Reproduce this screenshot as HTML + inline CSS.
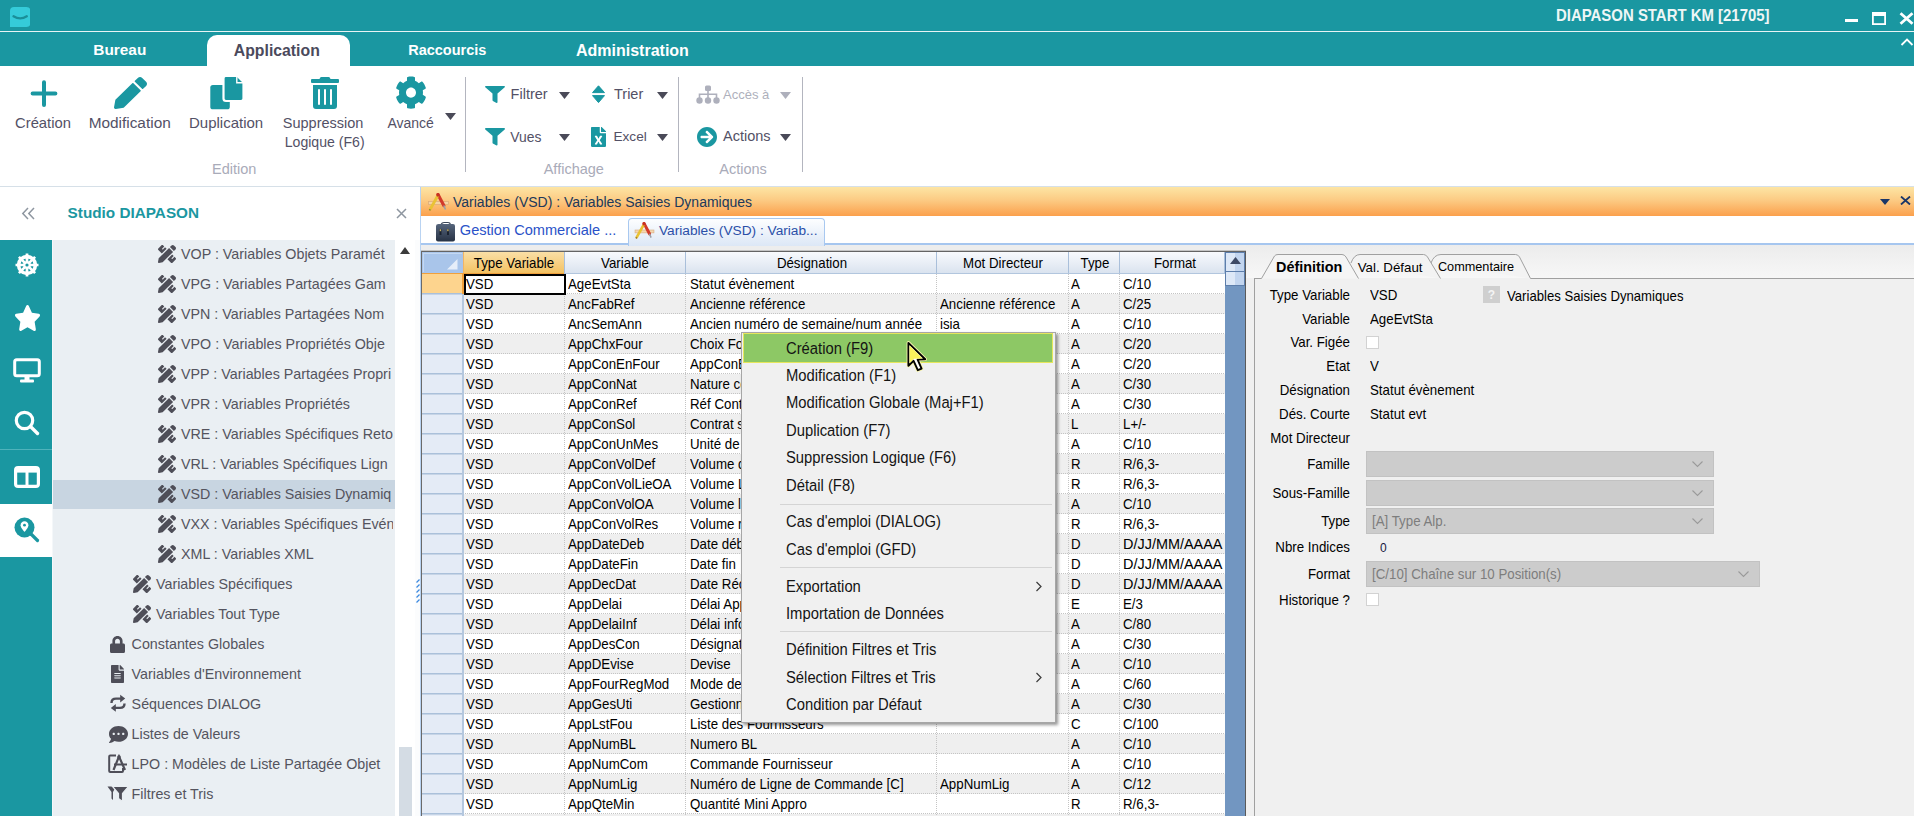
<!DOCTYPE html><html><head><meta charset="utf-8"><style>
html,body{margin:0;padding:0;}
body{width:1914px;height:816px;overflow:hidden;position:relative;background:#fff;font-family:"Liberation Sans", sans-serif;}
.t{position:absolute;white-space:nowrap;}
.r{position:absolute;}
</style></head><body>
<div class="r" style="left:0px;top:0px;width:1914px;height:31px;background:#1a97a1;"></div>
<div class="r" style="left:0px;top:31px;width:1914px;height:1px;background:#e8f4f5;"></div>
<div class="r" style="left:0px;top:32px;width:1914px;height:34px;background:#1a97a1;"></div>
<svg class="r" style="left:9.5px;top:7px;" width="20.5" height="20.5" viewBox="0 0 20.5 20.5"><path d="M0 4 Q0 0 4 0 H16.5 Q20.5 0 20.5 4 V16 Q20.5 20 16.5 20 H0 Z" fill="#35cbd9"/><path d="M3.5 9.3 Q10.2 13.6 16.8 9.3" stroke="#1a8f99" stroke-width="2.3" fill="none" stroke-linecap="round"/></svg>
<div class="t" style="left:1555.50px;top:4.79px;font-size:15.9px;line-height:21px;color:#eef6f6;font-weight:bold;transform:scaleX(0.94);transform-origin:left center;">DIAPASON START KM [21705]</div>
<div class="r" style="left:1845px;top:19px;width:13px;height:3px;background:#ffffff;"></div>
<svg class="r" style="left:1872px;top:12px;" width="14" height="13" viewBox="0 0 14 13"><rect x="0.9" y="1" width="12.2" height="11.1" fill="none" stroke="#fff" stroke-width="1.8"/><rect x="0" y="0" width="14" height="4" fill="#fff"/></svg>
<svg class="r" style="left:1899px;top:12px;" width="15" height="13" viewBox="0 0 15 13"><path d="M1.5 1.2 L13.5 11.8 M13.5 1.2 L1.5 11.8" stroke="#fff" stroke-width="2.8"/></svg>
<div class="t" style="left:93.30px;top:40.36px;font-size:15.4px;line-height:20px;color:#ffffff;font-weight:bold;">Bureau</div>
<div class="r" style="left:207px;top:35px;width:143px;height:31px;background:#fff;border-radius:10px 10px 0 0;"></div>
<div class="t" style="left:233.80px;top:39.63px;font-size:15.8px;line-height:21px;color:#4b4a5c;font-weight:bold;">Application</div>
<div class="t" style="left:408.20px;top:41.18px;font-size:14.5px;line-height:19px;color:#ffffff;font-weight:bold;">Raccourcis</div>
<div class="t" style="left:576.00px;top:39.66px;font-size:16.0px;line-height:21px;color:#ffffff;font-weight:bold;">Administration</div>
<svg class="r" style="left:1900px;top:37px;" width="14" height="10" viewBox="0 0 14 10"><path d="M1.5 8 L7 2.5 L12.5 8" stroke="#fff" stroke-width="1.8" fill="none"/></svg>
<div class="r" style="left:0px;top:186px;width:1914px;height:1px;background:#d6e0e8;"></div>
<svg class="r" style="left:30px;top:80px;" width="28" height="28" viewBox="0 0 28 28"><path d="M14 2.2 V25 M2.6 13.4 H25.4" stroke="#1a97a1" stroke-width="4" stroke-linecap="round"/></svg>
<svg class="r" style="left:114px;top:77px;" width="33" height="32" viewBox="0 0 512 512" preserveAspectRatio="none"><path d="M497.9 142.1l-46.1 46.1c-4.7 4.7-12.3 4.7-17 0l-111-111c-4.7-4.7-4.7-12.3 0-17l46.1-46.1c18.7-18.7 49.1-18.7 67.9 0l60.1 60.1c18.8 18.7 18.8 49.1 0 67.9zM284.2 99.8L21.6 362.4.4 483.9c-2.9 16.4 11.4 30.6 27.8 27.8l121.5-21.3 262.6-262.6c4.7-4.7 4.7-12.3 0-17l-111-111c-4.8-4.7-12.4-4.7-17.1 0z" fill="#1a97a1"/></svg>
<svg class="r" style="left:210px;top:76px;" width="34" height="34" viewBox="0 0 34 34"><rect x="0.3" y="9" width="19.5" height="24.3" rx="2.6" fill="#1a97a1"/><path d="M13.5 0 H27.5 L33.5 6 V22.5 Q33.5 25 31 25 H16 Q13.5 25 13.5 22.5 V2.5 Q13.5 0 16 0 Z" fill="#1a97a1" stroke="#fff" stroke-width="2.2"/><path d="M26.8 0.5 V6.8 H33.2" stroke="#fff" stroke-width="1.4" fill="none"/></svg>
<svg class="r" style="left:311px;top:77px;" width="28" height="32" viewBox="0 0 448 512" preserveAspectRatio="none"><path d="M32 464a48 48 0 0 0 48 48h288a48 48 0 0 0 48-48V128H32zm272-256a16 16 0 0 1 32 0v224a16 16 0 0 1-32 0zm-96 0a16 16 0 0 1 32 0v224a16 16 0 0 1-32 0zm-96 0a16 16 0 0 1 32 0v224a16 16 0 0 1-32 0zM432 32H312l-9.4-18.7A24 24 0 0 0 281.1 0H166.8a23.72 23.72 0 0 0-21.4 13.3L136 32H16A16 16 0 0 0 0 48v32a16 16 0 0 0 16 16h416a16 16 0 0 0 16-16V48a16 16 0 0 0-16-16z" fill="#1a97a1"/></svg>
<svg class="r" style="left:394.6px;top:76.3px;" width="32" height="33.2" viewBox="0 0 512 512" preserveAspectRatio="none"><path d="M487.4 315.7l-42.6-24.6c4.3-23.2 4.3-47 0-70.2l42.6-24.6c4.9-2.8 7.1-8.6 5.5-14-11.1-35.6-30-67.8-54.7-94.6-3.8-4.1-10-5.1-14.8-2.3L380.8 110c-17.900-15.4-38.5-27.3-60.8-35.1V25.8c0-5.6-3.9-10.5-9.4-11.7-36.7-8.2-74.3-7.8-109.2 0-5.5 1.2-9.4 6.1-9.4 11.7V75c-22.2 7.9-42.8 19.8-60.8 35.1L88.7 85.5c-4.9-2.8-11-1.9-14.8 2.3-24.7 26.7-43.6 58.9-54.7 94.6-1.7 5.4.6 11.2 5.5 14L67.3 221c-4.3 23.2-4.3 47 0 70.2l-42.6 24.6c-4.9 2.8-7.1 8.6-5.5 14 11.1 35.6 30 67.8 54.7 94.6 3.8 4.1 10 5.1 14.8 2.3l42.6-24.6c17.9 15.4 38.5 27.3 60.8 35.1v49.2c0 5.6 3.9 10.5 9.4 11.7 36.7 8.2 74.3 7.8 109.2 0 5.5-1.2 9.4-6.1 9.4-11.7v-49.2c22.2-7.9 42.8-19.8 60.8-35.1l42.6 24.6c4.9 2.8 11 1.9 14.8-2.3 24.7-26.7 43.6-58.9 54.7-94.6 1.5-5.5-.7-11.3-5.6-14.1zM256 336c-44.1 0-80-35.900-80-80s35.9-80 80-80 80 35.9 80 80-35.9 80-80 80z" fill="#1a97a1"/></svg>
<svg class="r" style="left:444.5px;top:113px;" width="11" height="7" viewBox="0 0 11 7"><path d="M0 0 L11 0 L5.5 7 Z" fill="#4a4a58"/></svg>
<div class="t" style="left:-17.00px;width:120px;text-align:center;top:113.67px;font-size:14.8px;line-height:19px;color:#535166;font-weight:normal;">Création</div>
<div class="t" style="left:69.70px;width:120px;text-align:center;top:112.96px;font-size:15.4px;line-height:20px;color:#535166;font-weight:normal;">Modification</div>
<div class="t" style="left:166.10px;width:120px;text-align:center;top:113.10px;font-size:15.0px;line-height:20px;color:#535166;font-weight:normal;">Duplication</div>
<div class="t" style="left:263.10px;width:120px;text-align:center;top:113.78px;font-size:14.5px;line-height:19px;color:#535166;font-weight:normal;">Suppression</div>
<div class="t" style="left:264.70px;width:120px;text-align:center;top:132.61px;font-size:14.1px;line-height:18px;color:#535166;font-weight:normal;">Logique (F6)</div>
<div class="t" style="left:350.70px;width:120px;text-align:center;top:114.45px;font-size:14.0px;line-height:18px;color:#535166;font-weight:normal;">Avancé</div>
<div class="t" style="left:174.25px;width:120px;text-align:center;top:159.68px;font-size:14.5px;line-height:19px;color:#a9abb9;font-weight:normal;">Edition</div>
<div class="r" style="left:465px;top:77px;width:1px;height:95px;background:#b3b5bf;"></div>
<div class="r" style="left:678px;top:77px;width:1px;height:95px;background:#b3b5bf;"></div>
<div class="r" style="left:802px;top:77px;width:1px;height:95px;background:#b3b5bf;"></div>
<svg class="r" style="left:485px;top:86px;" width="20" height="17" viewBox="0 0 512 512" preserveAspectRatio="none"><path d="M487.976 0H24.028C2.71 0-8.047 25.866 7.058 40.971L192 225.941V432c0 7.831 3.821 15.17 10.237 19.662l80 55.98C298.02 518.69 320 507.493 320 487.98V225.941l184.947-184.97C520.021 25.896 509.338 0 487.976 0z" fill="#1a97a1"/></svg>
<div class="t" style="left:510.60px;top:84.88px;font-size:14.5px;line-height:19px;color:#535166;font-weight:normal;">Filtrer</div>
<svg class="r" style="left:558.5px;top:92px;" width="11" height="7" viewBox="0 0 11 7"><path d="M0 0 L11 0 L5.5 7 Z" fill="#4a4a58"/></svg>
<svg class="r" style="left:592px;top:85px;" width="13" height="19" viewBox="0 0 13 19"><path d="M6.5 0.8 L12.5 7.6 L0.5 7.6 Z M0.5 10.6 L12.5 10.6 L6.5 17.6 Z" fill="#1a97a1" stroke="#1a97a1" stroke-width="1" stroke-linejoin="round"/></svg>
<div class="t" style="left:614.00px;top:84.88px;font-size:14.5px;line-height:19px;color:#535166;font-weight:normal;">Trier</div>
<svg class="r" style="left:657px;top:92px;" width="11" height="7" viewBox="0 0 11 7"><path d="M0 0 L11 0 L5.5 7 Z" fill="#4a4a58"/></svg>
<svg class="r" style="left:485px;top:128px;" width="20" height="17.5" viewBox="0 0 512 512" preserveAspectRatio="none"><path d="M487.976 0H24.028C2.71 0-8.047 25.866 7.058 40.971L192 225.941V432c0 7.831 3.821 15.17 10.237 19.662l80 55.98C298.02 518.69 320 507.493 320 487.98V225.941l184.947-184.97C520.021 25.896 509.338 0 487.976 0z" fill="#1a97a1"/></svg>
<div class="t" style="left:510.30px;top:127.68px;font-size:13.9px;line-height:18px;color:#535166;font-weight:normal;">Vues</div>
<svg class="r" style="left:558.5px;top:134px;" width="11" height="7" viewBox="0 0 11 7"><path d="M0 0 L11 0 L5.5 7 Z" fill="#4a4a58"/></svg>
<svg class="r" style="left:591px;top:127px;" width="15" height="20" viewBox="0 0 384 512" preserveAspectRatio="none"><path d="M224 136V0H24C10.7 0 0 10.7 0 24v464c0 13.3 10.7 24 24 24h336c13.3 0 24-10.7 24-24V160H248c-13.2 0-24-10.8-24-24zm60.1 106.5L224 336l60.1 93.5c5.1 8-.6 18.5-10.1 18.5h-34.9c-4.4 0-8.5-2.4-10.6-6.3C208.9 405.5 192 373 192 373c-6.4 14.8-10 20-36.6 68.8-2.1 3.9-6.1 6.3-10.5 6.3H110c-9.5 0-15.2-10.5-10.1-18.5l60.3-93.5-60.3-93.5c-5.2-8 .6-18.5 10.1-18.5h34.8c4.4 0 8.500 2.4 10.6 6.3 26.1 48.8 20 33.6 36.6 68.5 0 0 6.1-11.7 36.6-68.5 2.1-3.9 6.2-6.3 10.6-6.3H274c9.5-.1 15.2 10.4 10.1 18.4zM384 121.9v6.1H256V0h6.1c6.4 0 12.5 2.5 17 7l97.9 98c4.5 4.5 7 10.6 7 16.9z" fill="#1a97a1"/></svg>
<div class="t" style="left:613.50px;top:127.79px;font-size:13.6px;line-height:18px;color:#535166;font-weight:normal;">Excel</div>
<svg class="r" style="left:657px;top:134px;" width="11" height="7" viewBox="0 0 11 7"><path d="M0 0 L11 0 L5.5 7 Z" fill="#4a4a58"/></svg>
<div class="t" style="left:513.80px;width:120px;text-align:center;top:159.68px;font-size:14.5px;line-height:19px;color:#a9abb9;font-weight:normal;">Affichage</div>
<svg class="r" style="left:696px;top:85px;" width="24" height="19" viewBox="0 0 24 19"><g fill="#aeb0bc"><rect x="9" y="0.5" width="6" height="5.5" rx="1.5"/><path d="M12 5 V9 M3.5 13 V9.2 H20.5 V13 M12 9 V13" stroke="#aeb0bc" stroke-width="1.6" fill="none"/><circle cx="3.5" cy="15.5" r="3.2"/><circle cx="12" cy="15.5" r="3.2"/><circle cx="20.5" cy="15.5" r="3.2"/></g></svg>
<div class="t" style="left:723.00px;top:86.40px;font-size:13.0px;line-height:17px;color:#aeb0bc;font-weight:normal;">Accès à</div>
<svg class="r" style="left:780px;top:92px;" width="11" height="7" viewBox="0 0 11 7"><path d="M0 0 L11 0 L5.5 7 Z" fill="#aeb0bc"/></svg>
<svg class="r" style="left:697px;top:127px;" width="20" height="20" viewBox="8 8 496 496" preserveAspectRatio="none"><path d="M256 8c137 0 248 111 248 248S393 504 256 504 8 393 8 256 119 8 256 8zm-28.9 143.6l75.5 72.4H120c-13.3 0-24 10.7-24 24v16c0 13.3 10.7 24 24 24h182.6l-75.5 72.4c-9.7 9.3-9.9 24.8-.4 34.3l11 10.9c9.4 9.4 24.6 9.4 33.9 0L404.3 273c9.4-9.4 9.4-24.6 0-33.9L271.6 106.3c-9.4-9.4-24.6-9.4-33.9 0l-11 10.9c-9.5 9.6-9.3 25.1.4 34.4z" fill="#1a97a1"/></svg>
<div class="t" style="left:723.00px;top:126.98px;font-size:14.5px;line-height:19px;color:#535166;font-weight:normal;">Actions</div>
<svg class="r" style="left:780px;top:134px;" width="11" height="7" viewBox="0 0 11 7"><path d="M0 0 L11 0 L5.5 7 Z" fill="#4a4a58"/></svg>
<div class="t" style="left:683.00px;width:120px;text-align:center;top:159.68px;font-size:14.5px;line-height:19px;color:#a9abb9;font-weight:normal;">Actions</div>
<div class="r" style="left:0px;top:187px;width:420px;height:53px;background:#ffffff;"></div>
<svg class="r" style="left:21px;top:207px;" width="14" height="13" viewBox="0 0 14 13"><path d="M7 1 L1.8 6.5 L7 12 M13 1 L7.8 6.5 L13 12" stroke="#8e96a0" stroke-width="1.5" fill="none"/></svg>
<div class="t" style="left:67.60px;top:203.20px;font-size:15.3px;line-height:20px;color:#1b97a1;font-weight:bold;">Studio DIAPASON</div>
<svg class="r" style="left:396px;top:208px;" width="11" height="11" viewBox="0 0 11 11"><path d="M1 1 L10 10 M10 1 L1 10" stroke="#8e96a0" stroke-width="1.5"/></svg>
<div class="r" style="left:0px;top:240px;width:52px;height:576px;background:#1a97a1;"></div>
<div class="r" style="left:52px;top:240px;width:1px;height:576px;background:#f4f7f9;"></div>
<div class="r" style="left:0px;top:449px;width:52px;height:1px;background:#4fb3bb;"></div>
<div class="r" style="left:0px;top:504px;width:52px;height:53px;background:#ffffff;"></div>
<div class="r" style="left:53px;top:240px;width:342px;height:576px;background:#eaeff3;"></div>
<div class="r" style="left:395px;top:240px;width:20px;height:576px;background:#ffffff;"></div>
<div class="r" style="left:415px;top:240px;width:5px;height:576px;background:#fbfcfd;"></div>
<svg class="r" style="left:400px;top:247px" width="10" height="7"><path d="M0 7 L10 7 L5 0 Z" fill="#3c3c3c"/></svg>
<div class="r" style="left:399px;top:747px;width:13px;height:69px;background:#d4dce4;"></div>
<svg class="r" style="left:416px;top:579px;" width="4" height="4" viewBox="0 0 4 4"><path d="M0.5 3.5 L3.5 0.5" stroke="#3d8ae0" stroke-width="1.2"/></svg>
<svg class="r" style="left:416px;top:584px;" width="4" height="4" viewBox="0 0 4 4"><path d="M0.5 3.5 L3.5 0.5" stroke="#3d8ae0" stroke-width="1.2"/></svg>
<svg class="r" style="left:416px;top:589px;" width="4" height="4" viewBox="0 0 4 4"><path d="M0.5 3.5 L3.5 0.5" stroke="#3d8ae0" stroke-width="1.2"/></svg>
<svg class="r" style="left:416px;top:594px;" width="4" height="4" viewBox="0 0 4 4"><path d="M0.5 3.5 L3.5 0.5" stroke="#3d8ae0" stroke-width="1.2"/></svg>
<svg class="r" style="left:416px;top:599px;" width="4" height="4" viewBox="0 0 4 4"><path d="M0.5 3.5 L3.5 0.5" stroke="#3d8ae0" stroke-width="1.2"/></svg>
<svg class="r" style="left:14px;top:252px;" width="26" height="26" viewBox="0 0 26 26"><g fill="none" stroke="#fff">
<circle cx="13" cy="13" r="8.4" stroke-width="3.6"/>
<circle cx="13" cy="13" r="2.6" stroke-width="2.4"/>
</g>
<g stroke="#fff" stroke-width="2.7">
<path d="M13 1.5 V24.5 M1.5 13 H24.5 M4.9 4.9 L21.1 21.1 M21.1 4.9 L4.9 21.1"/>
</g>
<circle cx="13" cy="13" r="1.6" fill="#1a97a1"/></svg>
<svg class="r" style="left:14px;top:305px;" width="27" height="26" viewBox="0 0 576 512" preserveAspectRatio="none"><path d="M259.3 17.8L194 150.2 47.9 171.5c-26.2 3.8-36.7 36.1-17.7 54.6l105.7 103-25 145.5c-4.5 26.3 23.2 46 46.4 33.7L288 439.6l130.7 68.7c23.2 12.2 50.9-7.4 46.4-33.7l-25-145.5 105.7-103c19-18.5 8.5-50.8-17.7-54.6L382 150.2 316.7 17.8c-11.7-23.6-45.6-23.9-57.4 0z" fill="#ffffff"/></svg>
<svg class="r" style="left:13px;top:358px;" width="28" height="25" viewBox="0 0 28 25"><rect x="1.7" y="1.7" width="24.6" height="16" rx="2" fill="none" stroke="#fff" stroke-width="3"/><rect x="11.5" y="18" width="5" height="4" fill="#fff"/><rect x="7" y="21.5" width="14" height="3" rx="1" fill="#fff"/></svg>
<svg class="r" style="left:14px;top:410px;" width="26" height="26" viewBox="0 0 26 26"><circle cx="10.5" cy="10.5" r="8.2" fill="none" stroke="#fff" stroke-width="3.2"/><path d="M16.5 16.5 L23.5 23.5" stroke="#fff" stroke-width="3.4" stroke-linecap="round"/></svg>
<svg class="r" style="left:14px;top:466px;" width="26" height="22" viewBox="0 0 26 22"><rect x="1.6" y="1.6" width="22.8" height="18.8" rx="2.5" fill="none" stroke="#fff" stroke-width="3.2"/><rect x="1.6" y="1.6" width="22.8" height="5" fill="#fff"/><path d="M13 3 V20" stroke="#fff" stroke-width="3"/></svg>
<svg class="r" style="left:14px;top:517px;" width="26" height="26" viewBox="0 0 26 26"><circle cx="10.5" cy="10.5" r="10" fill="#1a97a1"/><path d="M17 17 L23.5 23.5" stroke="#1a97a1" stroke-width="3.2" stroke-linecap="round"/><path d="M10.5 4.3 C8.2 4.3 6.6 6 6.6 8.2 C6.6 10.8 10.5 14.8 10.5 14.8 C10.5 14.8 14.4 10.8 14.4 8.2 C14.4 6 12.8 4.3 10.5 4.3 Z" fill="#fff"/><circle cx="10.5" cy="8.2" r="1.4" fill="#1a97a1"/></svg>
<div class="r" style="left:53px;top:480px;width:342px;height:29px;background:#c8d5e1;"></div>
<div class="r" style="left:53px;top:240px;width:340px;height:576px;overflow:hidden;">
<svg class="r" style="left:105px;top:5.399999999999977px;" width="18" height="18" viewBox="0 0 512 512" preserveAspectRatio="none"><path d="M109.46 244.04l134.58-134.56-44.12-44.12-61.68 61.68a7.919 7.919 0 0 1-11.21 0l-11.21-11.21c-3.1-3.1-3.1-8.12 0-11.21l61.68-61.68-33.64-33.65C131.47-3.1 111.39-3.1 99 9.29L9.29 99c-12.38 12.39-12.39 32.47 0 44.86l100.17 100.18zm388.47-116.8c18.76-18.76 18.75-49.17 0-67.930l-45.25-45.25c-18.76-18.76-49.18-18.76-67.95 0l-46.02 46.01 113.2 113.2 46.02-46.03zM316.08 82.71l-297 296.96L.32 487.11c-2.53 14.49 10.09 27.11 24.59 24.56l107.45-18.840L429.28 195.9 316.08 82.71zm186.63 285.43l-33.64-33.64-61.68 61.68c-3.1 3.1-8.12 3.1-11.21 0l-11.21-11.21c-3.09-3.1-3.09-8.12 0-11.21l61.68-61.68-44.14-44.14L267.93 402.5l100.21 100.2c12.39 12.39 32.47 12.39 44.86 0l89.71-89.7c12.39-12.39 12.39-32.47 0-44.86z" fill="#4e4e58"/></svg>
<div class="t" style="left:128.00px;top:4.95px;font-size:14.3px;line-height:19px;color:#54545e;font-weight:normal;">VOP : Variables Objets Paramét</div>
<svg class="r" style="left:105px;top:35.39999999999998px;" width="18" height="18" viewBox="0 0 512 512" preserveAspectRatio="none"><path d="M109.46 244.04l134.58-134.56-44.12-44.12-61.68 61.68a7.919 7.919 0 0 1-11.21 0l-11.21-11.21c-3.1-3.1-3.1-8.12 0-11.21l61.68-61.68-33.64-33.65C131.47-3.1 111.39-3.1 99 9.29L9.29 99c-12.38 12.39-12.39 32.47 0 44.86l100.17 100.18zm388.47-116.8c18.76-18.76 18.75-49.17 0-67.930l-45.25-45.25c-18.76-18.76-49.18-18.76-67.95 0l-46.02 46.01 113.2 113.2 46.02-46.03zM316.08 82.71l-297 296.96L.32 487.11c-2.53 14.49 10.09 27.11 24.59 24.56l107.45-18.840L429.28 195.9 316.08 82.71zm186.63 285.43l-33.64-33.64-61.68 61.68c-3.1 3.1-8.12 3.1-11.21 0l-11.21-11.21c-3.09-3.1-3.09-8.12 0-11.21l61.68-61.68-44.14-44.14L267.93 402.5l100.21 100.2c12.39 12.39 32.47 12.39 44.86 0l89.71-89.7c12.39-12.39 12.39-32.47 0-44.86z" fill="#4e4e58"/></svg>
<div class="t" style="left:128.00px;top:34.95px;font-size:14.3px;line-height:19px;color:#54545e;font-weight:normal;">VPG : Variables Partagées Gam</div>
<svg class="r" style="left:105px;top:65.39999999999998px;" width="18" height="18" viewBox="0 0 512 512" preserveAspectRatio="none"><path d="M109.46 244.04l134.58-134.56-44.12-44.12-61.68 61.68a7.919 7.919 0 0 1-11.21 0l-11.21-11.21c-3.1-3.1-3.1-8.12 0-11.21l61.68-61.68-33.64-33.65C131.47-3.1 111.39-3.1 99 9.29L9.29 99c-12.38 12.39-12.39 32.47 0 44.86l100.17 100.18zm388.47-116.8c18.76-18.76 18.75-49.17 0-67.930l-45.25-45.25c-18.76-18.76-49.18-18.76-67.95 0l-46.02 46.01 113.2 113.2 46.02-46.03zM316.08 82.71l-297 296.96L.32 487.11c-2.53 14.49 10.09 27.11 24.59 24.56l107.45-18.840L429.28 195.9 316.08 82.71zm186.63 285.43l-33.64-33.64-61.68 61.68c-3.1 3.1-8.12 3.1-11.21 0l-11.21-11.21c-3.09-3.1-3.09-8.12 0-11.21l61.68-61.68-44.14-44.14L267.93 402.5l100.21 100.2c12.39 12.39 32.47 12.39 44.86 0l89.71-89.7c12.39-12.39 12.39-32.47 0-44.86z" fill="#4e4e58"/></svg>
<div class="t" style="left:128.00px;top:64.95px;font-size:14.3px;line-height:19px;color:#54545e;font-weight:normal;">VPN : Variables Partagées Nom</div>
<svg class="r" style="left:105px;top:95.39999999999998px;" width="18" height="18" viewBox="0 0 512 512" preserveAspectRatio="none"><path d="M109.46 244.04l134.58-134.56-44.12-44.12-61.68 61.68a7.919 7.919 0 0 1-11.21 0l-11.21-11.21c-3.1-3.1-3.1-8.12 0-11.21l61.68-61.68-33.64-33.65C131.47-3.1 111.39-3.1 99 9.29L9.29 99c-12.38 12.39-12.39 32.47 0 44.86l100.17 100.18zm388.47-116.8c18.76-18.76 18.75-49.17 0-67.930l-45.25-45.25c-18.76-18.76-49.18-18.76-67.95 0l-46.02 46.01 113.2 113.2 46.02-46.03zM316.08 82.71l-297 296.96L.32 487.11c-2.53 14.49 10.09 27.11 24.59 24.56l107.45-18.840L429.28 195.9 316.08 82.71zm186.63 285.43l-33.64-33.64-61.68 61.68c-3.1 3.1-8.12 3.1-11.21 0l-11.21-11.21c-3.09-3.1-3.09-8.12 0-11.21l61.68-61.68-44.14-44.14L267.93 402.5l100.21 100.2c12.39 12.39 32.47 12.39 44.86 0l89.71-89.7c12.39-12.39 12.39-32.47 0-44.86z" fill="#4e4e58"/></svg>
<div class="t" style="left:128.00px;top:94.95px;font-size:14.3px;line-height:19px;color:#54545e;font-weight:normal;">VPO : Variables Propriétés Obje</div>
<svg class="r" style="left:105px;top:125.39999999999998px;" width="18" height="18" viewBox="0 0 512 512" preserveAspectRatio="none"><path d="M109.46 244.04l134.58-134.56-44.12-44.12-61.68 61.68a7.919 7.919 0 0 1-11.21 0l-11.21-11.21c-3.1-3.1-3.1-8.12 0-11.21l61.68-61.68-33.64-33.65C131.47-3.1 111.39-3.1 99 9.29L9.29 99c-12.38 12.39-12.39 32.47 0 44.86l100.17 100.18zm388.47-116.8c18.76-18.76 18.75-49.17 0-67.930l-45.25-45.25c-18.76-18.76-49.18-18.76-67.95 0l-46.02 46.01 113.2 113.2 46.02-46.03zM316.08 82.71l-297 296.96L.32 487.11c-2.53 14.49 10.09 27.11 24.59 24.56l107.45-18.840L429.28 195.9 316.08 82.71zm186.63 285.43l-33.64-33.64-61.68 61.68c-3.1 3.1-8.12 3.1-11.21 0l-11.21-11.21c-3.09-3.1-3.09-8.12 0-11.21l61.68-61.68-44.14-44.14L267.93 402.5l100.21 100.2c12.39 12.39 32.47 12.39 44.86 0l89.71-89.7c12.39-12.39 12.39-32.47 0-44.86z" fill="#4e4e58"/></svg>
<div class="t" style="left:128.00px;top:124.95px;font-size:14.3px;line-height:19px;color:#54545e;font-weight:normal;">VPP : Variables Partagées Propri</div>
<svg class="r" style="left:105px;top:155.39999999999998px;" width="18" height="18" viewBox="0 0 512 512" preserveAspectRatio="none"><path d="M109.46 244.04l134.58-134.56-44.12-44.12-61.68 61.68a7.919 7.919 0 0 1-11.21 0l-11.21-11.21c-3.1-3.1-3.1-8.12 0-11.21l61.68-61.68-33.64-33.65C131.47-3.1 111.39-3.1 99 9.29L9.29 99c-12.38 12.39-12.39 32.47 0 44.86l100.17 100.18zm388.47-116.8c18.76-18.76 18.75-49.17 0-67.930l-45.25-45.25c-18.76-18.76-49.18-18.76-67.95 0l-46.02 46.01 113.2 113.2 46.02-46.03zM316.08 82.71l-297 296.96L.32 487.11c-2.53 14.49 10.09 27.11 24.59 24.56l107.45-18.840L429.28 195.9 316.08 82.71zm186.63 285.43l-33.64-33.64-61.68 61.68c-3.1 3.1-8.12 3.1-11.21 0l-11.21-11.21c-3.09-3.1-3.09-8.12 0-11.21l61.68-61.68-44.14-44.14L267.93 402.5l100.21 100.2c12.39 12.39 32.47 12.39 44.86 0l89.71-89.7c12.39-12.39 12.39-32.47 0-44.86z" fill="#4e4e58"/></svg>
<div class="t" style="left:128.00px;top:154.95px;font-size:14.3px;line-height:19px;color:#54545e;font-weight:normal;">VPR : Variables Propriétés</div>
<svg class="r" style="left:105px;top:185.39999999999998px;" width="18" height="18" viewBox="0 0 512 512" preserveAspectRatio="none"><path d="M109.46 244.04l134.58-134.56-44.12-44.12-61.68 61.68a7.919 7.919 0 0 1-11.21 0l-11.21-11.21c-3.1-3.1-3.1-8.12 0-11.21l61.68-61.68-33.64-33.65C131.47-3.1 111.39-3.1 99 9.29L9.29 99c-12.38 12.39-12.39 32.47 0 44.86l100.17 100.18zm388.47-116.8c18.76-18.76 18.75-49.17 0-67.930l-45.25-45.25c-18.76-18.76-49.18-18.76-67.95 0l-46.02 46.01 113.2 113.2 46.02-46.03zM316.08 82.71l-297 296.96L.32 487.11c-2.53 14.49 10.09 27.11 24.59 24.56l107.45-18.840L429.28 195.9 316.08 82.71zm186.63 285.43l-33.64-33.64-61.68 61.68c-3.1 3.1-8.12 3.1-11.21 0l-11.21-11.21c-3.09-3.1-3.09-8.12 0-11.21l61.68-61.68-44.14-44.14L267.93 402.5l100.21 100.2c12.39 12.39 32.47 12.39 44.86 0l89.71-89.7c12.39-12.39 12.39-32.47 0-44.86z" fill="#4e4e58"/></svg>
<div class="t" style="left:128.00px;top:184.95px;font-size:14.3px;line-height:19px;color:#54545e;font-weight:normal;">VRE : Variables Spécifiques Reto</div>
<svg class="r" style="left:105px;top:215.39999999999998px;" width="18" height="18" viewBox="0 0 512 512" preserveAspectRatio="none"><path d="M109.46 244.04l134.58-134.56-44.12-44.12-61.68 61.68a7.919 7.919 0 0 1-11.21 0l-11.21-11.21c-3.1-3.1-3.1-8.12 0-11.21l61.68-61.68-33.64-33.65C131.47-3.1 111.39-3.1 99 9.29L9.29 99c-12.38 12.39-12.39 32.47 0 44.86l100.17 100.18zm388.47-116.8c18.76-18.76 18.75-49.17 0-67.930l-45.25-45.25c-18.76-18.76-49.18-18.76-67.95 0l-46.02 46.01 113.2 113.2 46.02-46.03zM316.08 82.71l-297 296.96L.32 487.11c-2.53 14.49 10.09 27.11 24.59 24.56l107.45-18.840L429.28 195.9 316.08 82.71zm186.63 285.43l-33.64-33.64-61.68 61.68c-3.1 3.1-8.12 3.1-11.21 0l-11.21-11.21c-3.09-3.1-3.09-8.12 0-11.21l61.68-61.68-44.14-44.14L267.93 402.5l100.21 100.2c12.39 12.39 32.47 12.39 44.86 0l89.71-89.7c12.39-12.39 12.39-32.47 0-44.86z" fill="#4e4e58"/></svg>
<div class="t" style="left:128.00px;top:214.95px;font-size:14.3px;line-height:19px;color:#54545e;font-weight:normal;">VRL : Variables Spécifiques Lign</div>
<svg class="r" style="left:105px;top:245.39999999999998px;" width="18" height="18" viewBox="0 0 512 512" preserveAspectRatio="none"><path d="M109.46 244.04l134.58-134.56-44.12-44.12-61.68 61.68a7.919 7.919 0 0 1-11.21 0l-11.21-11.21c-3.1-3.1-3.1-8.12 0-11.21l61.68-61.68-33.64-33.65C131.47-3.1 111.39-3.1 99 9.29L9.29 99c-12.38 12.39-12.39 32.47 0 44.86l100.17 100.18zm388.47-116.8c18.76-18.76 18.75-49.17 0-67.930l-45.25-45.25c-18.76-18.76-49.18-18.76-67.95 0l-46.02 46.01 113.2 113.2 46.02-46.03zM316.08 82.71l-297 296.96L.32 487.11c-2.53 14.49 10.09 27.11 24.59 24.56l107.45-18.840L429.28 195.9 316.08 82.71zm186.63 285.43l-33.64-33.64-61.68 61.68c-3.1 3.1-8.12 3.1-11.21 0l-11.21-11.21c-3.09-3.1-3.09-8.12 0-11.21l61.68-61.68-44.14-44.14L267.93 402.5l100.21 100.2c12.39 12.39 32.47 12.39 44.86 0l89.71-89.7c12.39-12.39 12.39-32.47 0-44.86z" fill="#4e4e58"/></svg>
<div class="t" style="left:128.00px;top:244.95px;font-size:14.3px;line-height:19px;color:#54545e;font-weight:normal;">VSD : Variables Saisies Dynamiq</div>
<svg class="r" style="left:105px;top:275.4px;" width="18" height="18" viewBox="0 0 512 512" preserveAspectRatio="none"><path d="M109.46 244.04l134.58-134.56-44.12-44.12-61.68 61.68a7.919 7.919 0 0 1-11.21 0l-11.21-11.21c-3.1-3.1-3.1-8.12 0-11.21l61.68-61.68-33.64-33.65C131.47-3.1 111.39-3.1 99 9.29L9.29 99c-12.38 12.39-12.39 32.47 0 44.86l100.17 100.18zm388.47-116.8c18.76-18.76 18.75-49.17 0-67.930l-45.25-45.25c-18.76-18.76-49.18-18.76-67.95 0l-46.02 46.01 113.2 113.2 46.02-46.03zM316.08 82.71l-297 296.96L.32 487.11c-2.53 14.49 10.09 27.11 24.59 24.56l107.45-18.840L429.28 195.9 316.08 82.71zm186.63 285.43l-33.64-33.64-61.68 61.68c-3.1 3.1-8.12 3.1-11.21 0l-11.21-11.21c-3.09-3.1-3.09-8.12 0-11.21l61.68-61.68-44.14-44.14L267.93 402.5l100.21 100.2c12.39 12.39 32.47 12.39 44.86 0l89.71-89.7c12.39-12.39 12.39-32.47 0-44.86z" fill="#4e4e58"/></svg>
<div class="t" style="left:128.00px;top:274.95px;font-size:14.3px;line-height:19px;color:#54545e;font-weight:normal;">VXX : Variables Spécifiques Evén</div>
<svg class="r" style="left:105px;top:305.4px;" width="18" height="18" viewBox="0 0 512 512" preserveAspectRatio="none"><path d="M109.46 244.04l134.58-134.56-44.12-44.12-61.68 61.68a7.919 7.919 0 0 1-11.21 0l-11.21-11.21c-3.1-3.1-3.1-8.12 0-11.21l61.68-61.68-33.64-33.65C131.47-3.1 111.39-3.1 99 9.29L9.29 99c-12.38 12.39-12.39 32.47 0 44.86l100.17 100.18zm388.47-116.8c18.76-18.76 18.75-49.17 0-67.930l-45.25-45.25c-18.76-18.76-49.18-18.76-67.95 0l-46.02 46.01 113.2 113.2 46.02-46.03zM316.08 82.71l-297 296.96L.32 487.11c-2.53 14.49 10.09 27.11 24.59 24.56l107.45-18.840L429.28 195.9 316.08 82.71zm186.63 285.43l-33.64-33.64-61.68 61.68c-3.1 3.1-8.12 3.1-11.21 0l-11.21-11.21c-3.09-3.1-3.09-8.12 0-11.21l61.68-61.68-44.14-44.14L267.93 402.5l100.21 100.2c12.39 12.39 32.47 12.39 44.86 0l89.71-89.7c12.39-12.39 12.39-32.47 0-44.86z" fill="#4e4e58"/></svg>
<div class="t" style="left:128.00px;top:304.95px;font-size:14.3px;line-height:19px;color:#54545e;font-weight:normal;">XML : Variables XML</div>
<svg class="r" style="left:80px;top:335.4px;" width="18" height="18" viewBox="0 0 512 512" preserveAspectRatio="none"><path d="M109.46 244.04l134.58-134.56-44.12-44.12-61.68 61.68a7.919 7.919 0 0 1-11.21 0l-11.21-11.21c-3.1-3.1-3.1-8.12 0-11.21l61.68-61.68-33.64-33.65C131.47-3.1 111.39-3.1 99 9.29L9.29 99c-12.38 12.39-12.39 32.47 0 44.86l100.17 100.18zm388.47-116.8c18.76-18.76 18.75-49.17 0-67.930l-45.25-45.25c-18.76-18.76-49.18-18.76-67.95 0l-46.02 46.01 113.2 113.2 46.02-46.03zM316.08 82.71l-297 296.96L.32 487.11c-2.53 14.49 10.09 27.11 24.59 24.56l107.45-18.840L429.28 195.9 316.08 82.71zm186.63 285.43l-33.64-33.64-61.68 61.68c-3.1 3.1-8.12 3.1-11.21 0l-11.21-11.21c-3.09-3.1-3.09-8.12 0-11.21l61.68-61.68-44.14-44.14L267.93 402.5l100.21 100.2c12.39 12.39 32.47 12.39 44.86 0l89.71-89.7c12.39-12.39 12.39-32.47 0-44.86z" fill="#4e4e58"/></svg>
<div class="t" style="left:103.00px;top:334.95px;font-size:14.3px;line-height:19px;color:#54545e;font-weight:normal;">Variables Spécifiques</div>
<svg class="r" style="left:80px;top:365.4px;" width="18" height="18" viewBox="0 0 512 512" preserveAspectRatio="none"><path d="M109.46 244.04l134.58-134.56-44.12-44.12-61.68 61.68a7.919 7.919 0 0 1-11.21 0l-11.21-11.21c-3.1-3.1-3.1-8.12 0-11.21l61.68-61.68-33.64-33.65C131.47-3.1 111.39-3.1 99 9.29L9.29 99c-12.38 12.39-12.39 32.47 0 44.86l100.17 100.18zm388.47-116.8c18.76-18.76 18.75-49.17 0-67.930l-45.25-45.25c-18.76-18.76-49.18-18.76-67.95 0l-46.02 46.01 113.2 113.2 46.02-46.03zM316.08 82.71l-297 296.96L.32 487.11c-2.53 14.49 10.09 27.11 24.59 24.56l107.45-18.840L429.28 195.9 316.08 82.71zm186.63 285.43l-33.64-33.64-61.68 61.68c-3.1 3.1-8.12 3.1-11.21 0l-11.21-11.21c-3.09-3.1-3.09-8.12 0-11.21l61.68-61.68-44.14-44.14L267.93 402.5l100.21 100.2c12.39 12.39 32.47 12.39 44.86 0l89.71-89.7c12.39-12.39 12.39-32.47 0-44.86z" fill="#4e4e58"/></svg>
<div class="t" style="left:103.00px;top:364.95px;font-size:14.3px;line-height:19px;color:#54545e;font-weight:normal;">Variables Tout Type</div>
<svg class="r" style="left:57px;top:396.4px;" width="15" height="17" viewBox="0 0 448 512" preserveAspectRatio="none"><path d="M400 224h-24v-72C376 68.2 307.8 0 224 0S72 68.2 72 152v72H48c-26.5 0-48 21.5-48 48v192c0 26.5 21.5 48 48 48h352c26.5 0 48-21.5 48-48V272c0-26.5-21.5-48-48-48zm-104 0H152v-72c0-39.7 32.3-72 72-72s72 32.3 72 72v72z" fill="#4e4e58"/></svg>
<div class="t" style="left:78.60px;top:394.95px;font-size:14.3px;line-height:19px;color:#54545e;font-weight:normal;">Constantes Globales</div>
<svg class="r" style="left:58px;top:425.4px;" width="13" height="18" viewBox="0 0 384 512" preserveAspectRatio="none"><path d="M224 136V0H24C10.7 0 0 10.7 0 24v464c0 13.3 10.7 24 24 24h336c13.3 0 24-10.7 24-24V160H248c-13.2 0-24-10.8-24-24zm64 236c0 6.6-5.4 12-12 12H108c-6.6 0-12-5.4-12-12v-8c0-6.6 5.4-12 12-12h168c6.6 0 12 5.4 12 12v8zm0-64c0 6.6-5.4 12-12 12H108c-6.6 0-12-5.4-12-12v-8c0-6.6 5.4-12 12-12h168c6.6 0 12 5.4 12 12v8zm0-72v8c0 6.6-5.4 12-12 12H108c-6.6 0-12-5.4-12-12v-8c0-6.6 5.4-12 12-12h168c6.6 0 12 5.4 12 12zm96-114.1v6.1H256V0h6.1c6.4 0 12.5 2.5 17 7l97.9 98c4.5 4.5 7 10.6 7 16.9z" fill="#4e4e58"/></svg>
<div class="t" style="left:78.60px;top:424.95px;font-size:14.3px;line-height:19px;color:#54545e;font-weight:normal;">Variables d&#x27;Environnement</div>
<svg class="r" style="left:56px;top:454.4px;" width="18" height="19" viewBox="0 0 18 19"><path d="M2.5 9 C2.5 6 4 4.6 7 4.6 H13.5" stroke="#4e4e58" stroke-width="2.4" fill="none"/><path d="M11.2 0.8 L16.2 4.6 L11.2 8.4 Z" fill="#4e4e58"/><path d="M15.5 9.5 C15.5 12.5 14 13.9 11 13.9 H4.5" stroke="#4e4e58" stroke-width="2.4" fill="none"/><path d="M6.8 10.1 L1.8 13.9 L6.8 17.7 Z" fill="#4e4e58"/></svg>
<div class="t" style="left:78.60px;top:454.95px;font-size:14.3px;line-height:19px;color:#54545e;font-weight:normal;">Séquences DIALOG</div>
<svg class="r" style="left:56px;top:486.4px;" width="19" height="17" viewBox="0 32 512 448" preserveAspectRatio="none"><path d="M256 32C114.6 32 0 125.1 0 240c0 49.6 21.4 95 57 130.7C44.5 421.1 2.7 466 2.2 466.5c-2.2 2.3-2.8 5.7-1.5 8.7S4.8 480 8 480c66.3 0 116-31.8 140.6-51.4 32.7 12.3 69 19.4 107.4 19.4 141.4 0 256-93.1 256-208S397.4 32 256 32zM128 272c-17.7 0-32-14.3-32-32s14.3-32 32-32 32 14.3 32 32-14.3 32-32 32zm128 0c-17.7 0-32-14.3-32-32s14.3-32 32-32 32 14.3 32 32-14.3 32-32 32zm128 0c-17.7 0-32-14.3-32-32s14.3-32 32-32 32 14.3 32 32-14.3 32-32 32z" fill="#4e4e58"/></svg>
<div class="t" style="left:78.60px;top:484.95px;font-size:14.3px;line-height:19px;color:#54545e;font-weight:normal;">Listes de Valeurs</div>
<svg class="r" style="left:55px;top:514.4px;" width="21" height="19" viewBox="0 0 21 19"><path d="M8 1.5 H2.2 Q1.2 1.5 1.2 2.5 V17 Q1.2 18 2.2 18 H14 Q15 18 15 17 V14" stroke="#4e4e58" stroke-width="2" fill="none"/><path d="M5.5 16 L11 2.5 L17 16" stroke="#4e4e58" stroke-width="2.2" fill="none"/><path d="M6 10.5 H19" stroke="#4e4e58" stroke-width="2"/><circle cx="11" cy="3" r="1.8" fill="#4e4e58"/></svg>
<div class="t" style="left:78.60px;top:514.95px;font-size:14.3px;line-height:19px;color:#54545e;font-weight:normal;">LPO : Modèles de Liste Partagée Objet</div>
<svg class="r" style="left:54px;top:546.4px;" width="22" height="16" viewBox="0 0 22 16"><path d="M0.5 0.5 H9 L6 6 V14 L4.5 12.5 V6 Z" fill="#4e4e58"/><path d="M5.5 0.5 H21.5 L15.5 7.5 V15.5 L11.5 12.5 V7.5 Z" fill="#4e4e58" stroke="#e9eef2" stroke-width="1.2"/></svg>
<div class="t" style="left:78.60px;top:544.95px;font-size:14.3px;line-height:19px;color:#54545e;font-weight:normal;">Filtres et Tris</div>
</div>
<div class="r" style="left:420px;top:187px;width:1px;height:629px;background:#b9d3f2;"></div>
<div class="r" style="left:421px;top:187px;width:1493px;height:29px;background:linear-gradient(#fde5a4 0%,#fccb84 45%,#fba04c 100%);"></div>
<svg class="r" style="left:428px;top:193px;" width="21" height="18" viewBox="0 0 21 18"><rect x="0.5" y="8.5" width="20" height="3" fill="#f6d6a8" stroke="#d9a878" stroke-width="0.7" opacity="0.9"/>
<path d="M10 1.5 L15.8 12.5" stroke="#d23a2a" stroke-width="3.2" stroke-linecap="round"/>
<path d="M15.8 12.5 L17.5 16.5" stroke="#9aa0a8" stroke-width="1.6"/>
<path d="M9.6 3 L2.2 16.3" stroke="#e9c234" stroke-width="2.8" stroke-linecap="round"/>
<path d="M2.2 16.3 L1.6 17.4" stroke="#806040" stroke-width="1.4"/>
<circle cx="10" cy="2" r="1.7" fill="#c83020"/></svg>
<div class="t" style="left:453.00px;top:192.65px;font-size:14.0px;line-height:18px;color:#20385a;font-weight:normal;">Variables (VSD) : Variables Saisies Dynamiques</div>
<svg class="r" style="left:1880px;top:199px;" width="10" height="6" viewBox="0 0 10 6"><path d="M0 0 L10 0 L5.0 6 Z" fill="#1a3668"/></svg>
<svg class="r" style="left:1900px;top:196px;" width="11" height="9" viewBox="0 0 11 9"><path d="M1 0.5 L10 8.5 M10 0.5 L1 8.5" stroke="#1a3668" stroke-width="1.8"/></svg>
<div class="r" style="left:421px;top:216px;width:1493px;height:27px;background:#ffffff;"></div>
<div class="r" style="left:421px;top:243px;width:1493px;height:2px;background:#a6c6ef;"></div>
<div class="r" style="left:421px;top:245px;width:833px;height:5px;background:#ededed;"></div>
<div class="r" style="left:421px;top:250px;width:833px;height:1px;background:#c4c4c4;"></div>
<div class="r" style="left:628px;top:218px;width:195px;height:27px;border:1px solid #a8c8f0;border-bottom:none;border-radius:4px 4px 0 0;background:linear-gradient(#fdfeff,#dce7f6);"></div>
<svg class="r" style="left:435px;top:221px;" width="21" height="21" viewBox="0 0 21 21"><defs><linearGradient id="bc" x1="0" y1="0" x2="0" y2="1"><stop offset="0" stop-color="#56657c"/><stop offset="1" stop-color="#273244"/></linearGradient></defs>
<path d="M6 3.5 Q7 1.5 9 1.5 H13 Q15 1.5 15.5 3.5" stroke="#3a4658" stroke-width="1.2" fill="none"/>
<path d="M1 5 Q1 3 3.5 3 H18 Q20 3 20 5 V18.5 Q20 20.5 18 20.5 H3 Q1 20.5 1 18.5 Z" fill="url(#bc)"/>
<rect x="4.5" y="8" width="2" height="6" fill="#1a2230"/><rect x="12" y="8" width="2" height="6" fill="#1a2230"/>
<rect x="4.7" y="8.2" width="1.4" height="2" fill="#c9b160"/><rect x="12.2" y="8.2" width="1.4" height="2" fill="#c9b160"/></svg>
<div class="t" style="left:459.80px;top:220.64px;font-size:14.6px;line-height:19px;color:#2a52c8;font-weight:normal;">Gestion Commerciale ...</div>
<svg class="r" style="left:634px;top:222px;" width="21" height="17" viewBox="0 0 21 18"><rect x="0.5" y="8.5" width="20" height="3" fill="#f6d6a8" stroke="#d9a878" stroke-width="0.7" opacity="0.9"/>
<path d="M10 1.5 L15.8 12.5" stroke="#d23a2a" stroke-width="3.2" stroke-linecap="round"/>
<path d="M15.8 12.5 L17.5 16.5" stroke="#9aa0a8" stroke-width="1.6"/>
<path d="M9.6 3 L2.2 16.3" stroke="#e9c234" stroke-width="2.8" stroke-linecap="round"/>
<path d="M2.2 16.3 L1.6 17.4" stroke="#806040" stroke-width="1.4"/>
<circle cx="10" cy="2" r="1.7" fill="#c83020"/></svg>
<div class="t" style="left:659.00px;top:221.95px;font-size:13.7px;line-height:18px;color:#2b4fa8;font-weight:normal;">Variables (VSD) : Variab...</div>
<div class="r" style="left:421px;top:251px;width:825px;height:565px;background:#ffffff;"></div>
<div class="r" style="left:421px;top:251px;width:825px;height:1px;background:#646464;"></div>
<div class="r" style="left:421px;top:251px;width:1px;height:565px;background:#6a6a6a;"></div>
<div class="r" style="left:1245px;top:251px;width:1px;height:565px;background:#5a5a5a;"></div>
<div class="r" style="left:422px;top:252px;width:803px;height:21px;background:linear-gradient(#f8fafd,#dae3ef);"></div>
<div class="r" style="left:422px;top:273px;width:803px;height:1px;background:#b2c6de;"></div>
<div class="r" style="left:422px;top:252px;width:41px;height:21px;background:#a9c5ea;"></div>
<div class="r" style="left:423px;top:253px;width:39px;height:1px;background:#c4d8f2;"></div>
<div class="r" style="left:423px;top:253px;width:1px;height:19px;background:#c4d8f2;"></div>
<div class="r" style="left:463px;top:252px;width:1px;height:21px;background:#f2b464;"></div>
<svg class="r" style="left:447px;top:259px;" width="11" height="11" viewBox="0 0 11 11"><path d="M10.5 0 L10.5 10.5 L0 10.5 Z" fill="#e6eef9"/></svg>
<div class="r" style="left:464px;top:252px;width:100px;height:21px;background:linear-gradient(#fadfa6,#f3c263);"></div>
<div class="r" style="left:422px;top:273px;width:142px;height:1px;background:#f0a03c;"></div>
<div class="r" style="left:564px;top:252px;width:1px;height:21px;background:#a9bfda;"></div>
<div class="r" style="left:685px;top:252px;width:1px;height:21px;background:#a9bfda;"></div>
<div class="r" style="left:936px;top:252px;width:1px;height:21px;background:#a9bfda;"></div>
<div class="r" style="left:1068px;top:252px;width:1px;height:21px;background:#a9bfda;"></div>
<div class="r" style="left:1119px;top:252px;width:1px;height:21px;background:#a9bfda;"></div>
<div class="r" style="left:1224px;top:252px;width:1px;height:21px;background:#a9bfda;"></div>
<div class="t" style="left:454.20px;width:120px;text-align:center;top:253.75px;font-size:14.3px;line-height:19px;color:#000;font-weight:normal;transform:scaleX(0.93);transform-origin:center center;">Type Variable</div>
<div class="t" style="left:565.20px;width:120px;text-align:center;top:253.75px;font-size:14.3px;line-height:19px;color:#000;font-weight:normal;transform:scaleX(0.93);transform-origin:center center;">Variable</div>
<div class="t" style="left:751.80px;width:120px;text-align:center;top:253.75px;font-size:14.3px;line-height:19px;color:#000;font-weight:normal;transform:scaleX(0.93);transform-origin:center center;">Désignation</div>
<div class="t" style="left:943.00px;width:120px;text-align:center;top:253.75px;font-size:14.3px;line-height:19px;color:#000;font-weight:normal;transform:scaleX(0.93);transform-origin:center center;">Mot Directeur</div>
<div class="t" style="left:1034.80px;width:120px;text-align:center;top:253.75px;font-size:14.3px;line-height:19px;color:#000;font-weight:normal;transform:scaleX(0.93);transform-origin:center center;">Type</div>
<div class="t" style="left:1115.40px;width:120px;text-align:center;top:253.75px;font-size:14.3px;line-height:19px;color:#000;font-weight:normal;transform:scaleX(0.93);transform-origin:center center;">Format</div>
<div class="r" style="left:422px;top:274px;width:803px;height:542px;overflow:hidden;">
<div class="r" style="left:41px;top:0px;width:762px;height:20px;background:#ffffff;"></div>
<div class="r" style="left:41px;top:19px;width:762px;height:1px;background:repeating-linear-gradient(90deg,#c4c4c4 0 1px,transparent 1px 2px);"></div>
<div class="r" style="left:0px;top:0px;width:40px;height:20px;background:#fdd48e;"></div>
<div class="r" style="left:0px;top:19px;width:40px;height:1px;background:#aac0da;"></div>
<div class="r" style="left:40px;top:0px;width:2px;height:20px;background:#f0a03c;"></div>
<div class="t" style="left:44.00px;top:0.95px;font-size:14.3px;line-height:19px;color:#000;font-weight:normal;transform:scaleX(0.93);transform-origin:left center;">VSD</div>
<div class="t" style="left:145.60px;top:0.95px;font-size:14.3px;line-height:19px;color:#000;font-weight:normal;transform:scaleX(0.93);transform-origin:left center;">AgeEvtSta</div>
<div class="t" style="left:267.50px;top:0.95px;font-size:14.3px;line-height:19px;color:#000;font-weight:normal;transform:scaleX(0.93);transform-origin:left center;">Statut évènement</div>
<div class="t" style="left:649.00px;top:0.95px;font-size:14.3px;line-height:19px;color:#000;font-weight:normal;transform:scaleX(0.93);transform-origin:left center;">A</div>
<div class="t" style="left:701.00px;top:0.95px;font-size:14.3px;line-height:19px;color:#000;font-weight:normal;transform:scaleX(0.93);transform-origin:left center;">C/10</div>
<div class="r" style="left:41px;top:20px;width:762px;height:20px;background:#efefef;"></div>
<div class="r" style="left:41px;top:39px;width:762px;height:1px;background:repeating-linear-gradient(90deg,#c4c4c4 0 1px,transparent 1px 2px);"></div>
<div class="r" style="left:0px;top:20px;width:40px;height:20px;background:#e4ebf6;"></div>
<div class="r" style="left:0px;top:39px;width:40px;height:1px;background:#aac0da;"></div>
<div class="r" style="left:0px;top:20px;width:40px;height:1px;background:#c6d4e6;"></div>
<div class="r" style="left:40px;top:20px;width:2px;height:20px;background:#b4c7de;"></div>
<div class="t" style="left:44.00px;top:20.95px;font-size:14.3px;line-height:19px;color:#000;font-weight:normal;transform:scaleX(0.93);transform-origin:left center;">VSD</div>
<div class="t" style="left:145.60px;top:20.95px;font-size:14.3px;line-height:19px;color:#000;font-weight:normal;transform:scaleX(0.93);transform-origin:left center;">AncFabRef</div>
<div class="t" style="left:267.50px;top:20.95px;font-size:14.3px;line-height:19px;color:#000;font-weight:normal;transform:scaleX(0.93);transform-origin:left center;">Ancienne référence</div>
<div class="t" style="left:518.00px;top:20.95px;font-size:14.3px;line-height:19px;color:#000;font-weight:normal;transform:scaleX(0.93);transform-origin:left center;">Ancienne référence</div>
<div class="t" style="left:649.00px;top:20.95px;font-size:14.3px;line-height:19px;color:#000;font-weight:normal;transform:scaleX(0.93);transform-origin:left center;">A</div>
<div class="t" style="left:701.00px;top:20.95px;font-size:14.3px;line-height:19px;color:#000;font-weight:normal;transform:scaleX(0.93);transform-origin:left center;">C/25</div>
<div class="r" style="left:41px;top:40px;width:762px;height:20px;background:#ffffff;"></div>
<div class="r" style="left:41px;top:59px;width:762px;height:1px;background:repeating-linear-gradient(90deg,#c4c4c4 0 1px,transparent 1px 2px);"></div>
<div class="r" style="left:0px;top:40px;width:40px;height:20px;background:#e4ebf6;"></div>
<div class="r" style="left:0px;top:59px;width:40px;height:1px;background:#aac0da;"></div>
<div class="r" style="left:0px;top:40px;width:40px;height:1px;background:#c6d4e6;"></div>
<div class="r" style="left:40px;top:40px;width:2px;height:20px;background:#b4c7de;"></div>
<div class="t" style="left:44.00px;top:40.95px;font-size:14.3px;line-height:19px;color:#000;font-weight:normal;transform:scaleX(0.93);transform-origin:left center;">VSD</div>
<div class="t" style="left:145.60px;top:40.95px;font-size:14.3px;line-height:19px;color:#000;font-weight:normal;transform:scaleX(0.93);transform-origin:left center;">AncSemAnn</div>
<div class="t" style="left:267.50px;top:40.95px;font-size:14.3px;line-height:19px;color:#000;font-weight:normal;transform:scaleX(0.93);transform-origin:left center;">Ancien numéro de semaine/num année</div>
<div class="t" style="left:518.00px;top:40.95px;font-size:14.3px;line-height:19px;color:#000;font-weight:normal;transform:scaleX(0.93);transform-origin:left center;">isia</div>
<div class="t" style="left:649.00px;top:40.95px;font-size:14.3px;line-height:19px;color:#000;font-weight:normal;transform:scaleX(0.93);transform-origin:left center;">A</div>
<div class="t" style="left:701.00px;top:40.95px;font-size:14.3px;line-height:19px;color:#000;font-weight:normal;transform:scaleX(0.93);transform-origin:left center;">C/10</div>
<div class="r" style="left:41px;top:60px;width:762px;height:20px;background:#efefef;"></div>
<div class="r" style="left:41px;top:79px;width:762px;height:1px;background:repeating-linear-gradient(90deg,#c4c4c4 0 1px,transparent 1px 2px);"></div>
<div class="r" style="left:0px;top:60px;width:40px;height:20px;background:#e4ebf6;"></div>
<div class="r" style="left:0px;top:79px;width:40px;height:1px;background:#aac0da;"></div>
<div class="r" style="left:0px;top:60px;width:40px;height:1px;background:#c6d4e6;"></div>
<div class="r" style="left:40px;top:60px;width:2px;height:20px;background:#b4c7de;"></div>
<div class="t" style="left:44.00px;top:60.95px;font-size:14.3px;line-height:19px;color:#000;font-weight:normal;transform:scaleX(0.93);transform-origin:left center;">VSD</div>
<div class="t" style="left:145.60px;top:60.95px;font-size:14.3px;line-height:19px;color:#000;font-weight:normal;transform:scaleX(0.93);transform-origin:left center;">AppChxFour</div>
<div class="t" style="left:267.50px;top:60.95px;font-size:14.3px;line-height:19px;color:#000;font-weight:normal;transform:scaleX(0.93);transform-origin:left center;">Choix Fournisseur</div>
<div class="t" style="left:649.00px;top:60.95px;font-size:14.3px;line-height:19px;color:#000;font-weight:normal;transform:scaleX(0.93);transform-origin:left center;">A</div>
<div class="t" style="left:701.00px;top:60.95px;font-size:14.3px;line-height:19px;color:#000;font-weight:normal;transform:scaleX(0.93);transform-origin:left center;">C/20</div>
<div class="r" style="left:41px;top:80px;width:762px;height:20px;background:#ffffff;"></div>
<div class="r" style="left:41px;top:99px;width:762px;height:1px;background:repeating-linear-gradient(90deg,#c4c4c4 0 1px,transparent 1px 2px);"></div>
<div class="r" style="left:0px;top:80px;width:40px;height:20px;background:#e4ebf6;"></div>
<div class="r" style="left:0px;top:99px;width:40px;height:1px;background:#aac0da;"></div>
<div class="r" style="left:0px;top:80px;width:40px;height:1px;background:#c6d4e6;"></div>
<div class="r" style="left:40px;top:80px;width:2px;height:20px;background:#b4c7de;"></div>
<div class="t" style="left:44.00px;top:80.95px;font-size:14.3px;line-height:19px;color:#000;font-weight:normal;transform:scaleX(0.93);transform-origin:left center;">VSD</div>
<div class="t" style="left:145.60px;top:80.95px;font-size:14.3px;line-height:19px;color:#000;font-weight:normal;transform:scaleX(0.93);transform-origin:left center;">AppConEnFour</div>
<div class="t" style="left:267.50px;top:80.95px;font-size:14.3px;line-height:19px;color:#000;font-weight:normal;transform:scaleX(0.93);transform-origin:left center;">AppConEnFour</div>
<div class="t" style="left:649.00px;top:80.95px;font-size:14.3px;line-height:19px;color:#000;font-weight:normal;transform:scaleX(0.93);transform-origin:left center;">A</div>
<div class="t" style="left:701.00px;top:80.95px;font-size:14.3px;line-height:19px;color:#000;font-weight:normal;transform:scaleX(0.93);transform-origin:left center;">C/20</div>
<div class="r" style="left:41px;top:100px;width:762px;height:20px;background:#efefef;"></div>
<div class="r" style="left:41px;top:119px;width:762px;height:1px;background:repeating-linear-gradient(90deg,#c4c4c4 0 1px,transparent 1px 2px);"></div>
<div class="r" style="left:0px;top:100px;width:40px;height:20px;background:#e4ebf6;"></div>
<div class="r" style="left:0px;top:119px;width:40px;height:1px;background:#aac0da;"></div>
<div class="r" style="left:0px;top:100px;width:40px;height:1px;background:#c6d4e6;"></div>
<div class="r" style="left:40px;top:100px;width:2px;height:20px;background:#b4c7de;"></div>
<div class="t" style="left:44.00px;top:100.95px;font-size:14.3px;line-height:19px;color:#000;font-weight:normal;transform:scaleX(0.93);transform-origin:left center;">VSD</div>
<div class="t" style="left:145.60px;top:100.95px;font-size:14.3px;line-height:19px;color:#000;font-weight:normal;transform:scaleX(0.93);transform-origin:left center;">AppConNat</div>
<div class="t" style="left:267.50px;top:100.95px;font-size:14.3px;line-height:19px;color:#000;font-weight:normal;transform:scaleX(0.93);transform-origin:left center;">Nature contrat</div>
<div class="t" style="left:649.00px;top:100.95px;font-size:14.3px;line-height:19px;color:#000;font-weight:normal;transform:scaleX(0.93);transform-origin:left center;">A</div>
<div class="t" style="left:701.00px;top:100.95px;font-size:14.3px;line-height:19px;color:#000;font-weight:normal;transform:scaleX(0.93);transform-origin:left center;">C/30</div>
<div class="r" style="left:41px;top:120px;width:762px;height:20px;background:#ffffff;"></div>
<div class="r" style="left:41px;top:139px;width:762px;height:1px;background:repeating-linear-gradient(90deg,#c4c4c4 0 1px,transparent 1px 2px);"></div>
<div class="r" style="left:0px;top:120px;width:40px;height:20px;background:#e4ebf6;"></div>
<div class="r" style="left:0px;top:139px;width:40px;height:1px;background:#aac0da;"></div>
<div class="r" style="left:0px;top:120px;width:40px;height:1px;background:#c6d4e6;"></div>
<div class="r" style="left:40px;top:120px;width:2px;height:20px;background:#b4c7de;"></div>
<div class="t" style="left:44.00px;top:120.95px;font-size:14.3px;line-height:19px;color:#000;font-weight:normal;transform:scaleX(0.93);transform-origin:left center;">VSD</div>
<div class="t" style="left:145.60px;top:120.95px;font-size:14.3px;line-height:19px;color:#000;font-weight:normal;transform:scaleX(0.93);transform-origin:left center;">AppConRef</div>
<div class="t" style="left:267.50px;top:120.95px;font-size:14.3px;line-height:19px;color:#000;font-weight:normal;transform:scaleX(0.93);transform-origin:left center;">Réf Contrat</div>
<div class="t" style="left:649.00px;top:120.95px;font-size:14.3px;line-height:19px;color:#000;font-weight:normal;transform:scaleX(0.93);transform-origin:left center;">A</div>
<div class="t" style="left:701.00px;top:120.95px;font-size:14.3px;line-height:19px;color:#000;font-weight:normal;transform:scaleX(0.93);transform-origin:left center;">C/30</div>
<div class="r" style="left:41px;top:140px;width:762px;height:20px;background:#efefef;"></div>
<div class="r" style="left:41px;top:159px;width:762px;height:1px;background:repeating-linear-gradient(90deg,#c4c4c4 0 1px,transparent 1px 2px);"></div>
<div class="r" style="left:0px;top:140px;width:40px;height:20px;background:#e4ebf6;"></div>
<div class="r" style="left:0px;top:159px;width:40px;height:1px;background:#aac0da;"></div>
<div class="r" style="left:0px;top:140px;width:40px;height:1px;background:#c6d4e6;"></div>
<div class="r" style="left:40px;top:140px;width:2px;height:20px;background:#b4c7de;"></div>
<div class="t" style="left:44.00px;top:140.95px;font-size:14.3px;line-height:19px;color:#000;font-weight:normal;transform:scaleX(0.93);transform-origin:left center;">VSD</div>
<div class="t" style="left:145.60px;top:140.95px;font-size:14.3px;line-height:19px;color:#000;font-weight:normal;transform:scaleX(0.93);transform-origin:left center;">AppConSol</div>
<div class="t" style="left:267.50px;top:140.95px;font-size:14.3px;line-height:19px;color:#000;font-weight:normal;transform:scaleX(0.93);transform-origin:left center;">Contrat soldé</div>
<div class="t" style="left:649.00px;top:140.95px;font-size:14.3px;line-height:19px;color:#000;font-weight:normal;transform:scaleX(0.93);transform-origin:left center;">L</div>
<div class="t" style="left:701.00px;top:140.95px;font-size:14.3px;line-height:19px;color:#000;font-weight:normal;transform:scaleX(0.93);transform-origin:left center;">L+/-</div>
<div class="r" style="left:41px;top:160px;width:762px;height:20px;background:#ffffff;"></div>
<div class="r" style="left:41px;top:179px;width:762px;height:1px;background:repeating-linear-gradient(90deg,#c4c4c4 0 1px,transparent 1px 2px);"></div>
<div class="r" style="left:0px;top:160px;width:40px;height:20px;background:#e4ebf6;"></div>
<div class="r" style="left:0px;top:179px;width:40px;height:1px;background:#aac0da;"></div>
<div class="r" style="left:0px;top:160px;width:40px;height:1px;background:#c6d4e6;"></div>
<div class="r" style="left:40px;top:160px;width:2px;height:20px;background:#b4c7de;"></div>
<div class="t" style="left:44.00px;top:160.95px;font-size:14.3px;line-height:19px;color:#000;font-weight:normal;transform:scaleX(0.93);transform-origin:left center;">VSD</div>
<div class="t" style="left:145.60px;top:160.95px;font-size:14.3px;line-height:19px;color:#000;font-weight:normal;transform:scaleX(0.93);transform-origin:left center;">AppConUnMes</div>
<div class="t" style="left:267.50px;top:160.95px;font-size:14.3px;line-height:19px;color:#000;font-weight:normal;transform:scaleX(0.93);transform-origin:left center;">Unité de mesure</div>
<div class="t" style="left:649.00px;top:160.95px;font-size:14.3px;line-height:19px;color:#000;font-weight:normal;transform:scaleX(0.93);transform-origin:left center;">A</div>
<div class="t" style="left:701.00px;top:160.95px;font-size:14.3px;line-height:19px;color:#000;font-weight:normal;transform:scaleX(0.93);transform-origin:left center;">C/10</div>
<div class="r" style="left:41px;top:180px;width:762px;height:20px;background:#efefef;"></div>
<div class="r" style="left:41px;top:199px;width:762px;height:1px;background:repeating-linear-gradient(90deg,#c4c4c4 0 1px,transparent 1px 2px);"></div>
<div class="r" style="left:0px;top:180px;width:40px;height:20px;background:#e4ebf6;"></div>
<div class="r" style="left:0px;top:199px;width:40px;height:1px;background:#aac0da;"></div>
<div class="r" style="left:0px;top:180px;width:40px;height:1px;background:#c6d4e6;"></div>
<div class="r" style="left:40px;top:180px;width:2px;height:20px;background:#b4c7de;"></div>
<div class="t" style="left:44.00px;top:180.95px;font-size:14.3px;line-height:19px;color:#000;font-weight:normal;transform:scaleX(0.93);transform-origin:left center;">VSD</div>
<div class="t" style="left:145.60px;top:180.95px;font-size:14.3px;line-height:19px;color:#000;font-weight:normal;transform:scaleX(0.93);transform-origin:left center;">AppConVolDef</div>
<div class="t" style="left:267.50px;top:180.95px;font-size:14.3px;line-height:19px;color:#000;font-weight:normal;transform:scaleX(0.93);transform-origin:left center;">Volume défini</div>
<div class="t" style="left:649.00px;top:180.95px;font-size:14.3px;line-height:19px;color:#000;font-weight:normal;transform:scaleX(0.93);transform-origin:left center;">R</div>
<div class="t" style="left:701.00px;top:180.95px;font-size:14.3px;line-height:19px;color:#000;font-weight:normal;transform:scaleX(0.93);transform-origin:left center;">R/6,3-</div>
<div class="r" style="left:41px;top:200px;width:762px;height:20px;background:#ffffff;"></div>
<div class="r" style="left:41px;top:219px;width:762px;height:1px;background:repeating-linear-gradient(90deg,#c4c4c4 0 1px,transparent 1px 2px);"></div>
<div class="r" style="left:0px;top:200px;width:40px;height:20px;background:#e4ebf6;"></div>
<div class="r" style="left:0px;top:219px;width:40px;height:1px;background:#aac0da;"></div>
<div class="r" style="left:0px;top:200px;width:40px;height:1px;background:#c6d4e6;"></div>
<div class="r" style="left:40px;top:200px;width:2px;height:20px;background:#b4c7de;"></div>
<div class="t" style="left:44.00px;top:200.95px;font-size:14.3px;line-height:19px;color:#000;font-weight:normal;transform:scaleX(0.93);transform-origin:left center;">VSD</div>
<div class="t" style="left:145.60px;top:200.95px;font-size:14.3px;line-height:19px;color:#000;font-weight:normal;transform:scaleX(0.93);transform-origin:left center;">AppConVolLieOA</div>
<div class="t" style="left:267.50px;top:200.95px;font-size:14.3px;line-height:19px;color:#000;font-weight:normal;transform:scaleX(0.93);transform-origin:left center;">Volume Lié OA</div>
<div class="t" style="left:649.00px;top:200.95px;font-size:14.3px;line-height:19px;color:#000;font-weight:normal;transform:scaleX(0.93);transform-origin:left center;">R</div>
<div class="t" style="left:701.00px;top:200.95px;font-size:14.3px;line-height:19px;color:#000;font-weight:normal;transform:scaleX(0.93);transform-origin:left center;">R/6,3-</div>
<div class="r" style="left:41px;top:220px;width:762px;height:20px;background:#efefef;"></div>
<div class="r" style="left:41px;top:239px;width:762px;height:1px;background:repeating-linear-gradient(90deg,#c4c4c4 0 1px,transparent 1px 2px);"></div>
<div class="r" style="left:0px;top:220px;width:40px;height:20px;background:#e4ebf6;"></div>
<div class="r" style="left:0px;top:239px;width:40px;height:1px;background:#aac0da;"></div>
<div class="r" style="left:0px;top:220px;width:40px;height:1px;background:#c6d4e6;"></div>
<div class="r" style="left:40px;top:220px;width:2px;height:20px;background:#b4c7de;"></div>
<div class="t" style="left:44.00px;top:220.95px;font-size:14.3px;line-height:19px;color:#000;font-weight:normal;transform:scaleX(0.93);transform-origin:left center;">VSD</div>
<div class="t" style="left:145.60px;top:220.95px;font-size:14.3px;line-height:19px;color:#000;font-weight:normal;transform:scaleX(0.93);transform-origin:left center;">AppConVolOA</div>
<div class="t" style="left:267.50px;top:220.95px;font-size:14.3px;line-height:19px;color:#000;font-weight:normal;transform:scaleX(0.93);transform-origin:left center;">Volume lié OA</div>
<div class="t" style="left:649.00px;top:220.95px;font-size:14.3px;line-height:19px;color:#000;font-weight:normal;transform:scaleX(0.93);transform-origin:left center;">A</div>
<div class="t" style="left:701.00px;top:220.95px;font-size:14.3px;line-height:19px;color:#000;font-weight:normal;transform:scaleX(0.93);transform-origin:left center;">C/10</div>
<div class="r" style="left:41px;top:240px;width:762px;height:20px;background:#ffffff;"></div>
<div class="r" style="left:41px;top:259px;width:762px;height:1px;background:repeating-linear-gradient(90deg,#c4c4c4 0 1px,transparent 1px 2px);"></div>
<div class="r" style="left:0px;top:240px;width:40px;height:20px;background:#e4ebf6;"></div>
<div class="r" style="left:0px;top:259px;width:40px;height:1px;background:#aac0da;"></div>
<div class="r" style="left:0px;top:240px;width:40px;height:1px;background:#c6d4e6;"></div>
<div class="r" style="left:40px;top:240px;width:2px;height:20px;background:#b4c7de;"></div>
<div class="t" style="left:44.00px;top:240.95px;font-size:14.3px;line-height:19px;color:#000;font-weight:normal;transform:scaleX(0.93);transform-origin:left center;">VSD</div>
<div class="t" style="left:145.60px;top:240.95px;font-size:14.3px;line-height:19px;color:#000;font-weight:normal;transform:scaleX(0.93);transform-origin:left center;">AppConVolRes</div>
<div class="t" style="left:267.50px;top:240.95px;font-size:14.3px;line-height:19px;color:#000;font-weight:normal;transform:scaleX(0.93);transform-origin:left center;">Volume restant</div>
<div class="t" style="left:649.00px;top:240.95px;font-size:14.3px;line-height:19px;color:#000;font-weight:normal;transform:scaleX(0.93);transform-origin:left center;">R</div>
<div class="t" style="left:701.00px;top:240.95px;font-size:14.3px;line-height:19px;color:#000;font-weight:normal;transform:scaleX(0.93);transform-origin:left center;">R/6,3-</div>
<div class="r" style="left:41px;top:260px;width:762px;height:20px;background:#efefef;"></div>
<div class="r" style="left:41px;top:279px;width:762px;height:1px;background:repeating-linear-gradient(90deg,#c4c4c4 0 1px,transparent 1px 2px);"></div>
<div class="r" style="left:0px;top:260px;width:40px;height:20px;background:#e4ebf6;"></div>
<div class="r" style="left:0px;top:279px;width:40px;height:1px;background:#aac0da;"></div>
<div class="r" style="left:0px;top:260px;width:40px;height:1px;background:#c6d4e6;"></div>
<div class="r" style="left:40px;top:260px;width:2px;height:20px;background:#b4c7de;"></div>
<div class="t" style="left:44.00px;top:260.95px;font-size:14.3px;line-height:19px;color:#000;font-weight:normal;transform:scaleX(0.93);transform-origin:left center;">VSD</div>
<div class="t" style="left:145.60px;top:260.95px;font-size:14.3px;line-height:19px;color:#000;font-weight:normal;transform:scaleX(0.93);transform-origin:left center;">AppDateDeb</div>
<div class="t" style="left:267.50px;top:260.95px;font-size:14.3px;line-height:19px;color:#000;font-weight:normal;transform:scaleX(0.93);transform-origin:left center;">Date début</div>
<div class="t" style="left:649.00px;top:260.95px;font-size:14.3px;line-height:19px;color:#000;font-weight:normal;transform:scaleX(0.93);transform-origin:left center;">D</div>
<div class="t" style="left:701.00px;top:260.95px;font-size:14.3px;line-height:19px;color:#000;font-weight:normal;transform:scaleX(1.01);transform-origin:left center;">D/JJ/MM/AAAA</div>
<div class="r" style="left:41px;top:280px;width:762px;height:20px;background:#ffffff;"></div>
<div class="r" style="left:41px;top:299px;width:762px;height:1px;background:repeating-linear-gradient(90deg,#c4c4c4 0 1px,transparent 1px 2px);"></div>
<div class="r" style="left:0px;top:280px;width:40px;height:20px;background:#e4ebf6;"></div>
<div class="r" style="left:0px;top:299px;width:40px;height:1px;background:#aac0da;"></div>
<div class="r" style="left:0px;top:280px;width:40px;height:1px;background:#c6d4e6;"></div>
<div class="r" style="left:40px;top:280px;width:2px;height:20px;background:#b4c7de;"></div>
<div class="t" style="left:44.00px;top:280.95px;font-size:14.3px;line-height:19px;color:#000;font-weight:normal;transform:scaleX(0.93);transform-origin:left center;">VSD</div>
<div class="t" style="left:145.60px;top:280.95px;font-size:14.3px;line-height:19px;color:#000;font-weight:normal;transform:scaleX(0.93);transform-origin:left center;">AppDateFin</div>
<div class="t" style="left:267.50px;top:280.95px;font-size:14.3px;line-height:19px;color:#000;font-weight:normal;transform:scaleX(0.93);transform-origin:left center;">Date fin</div>
<div class="t" style="left:649.00px;top:280.95px;font-size:14.3px;line-height:19px;color:#000;font-weight:normal;transform:scaleX(0.93);transform-origin:left center;">D</div>
<div class="t" style="left:701.00px;top:280.95px;font-size:14.3px;line-height:19px;color:#000;font-weight:normal;transform:scaleX(1.01);transform-origin:left center;">D/JJ/MM/AAAA</div>
<div class="r" style="left:41px;top:300px;width:762px;height:20px;background:#efefef;"></div>
<div class="r" style="left:41px;top:319px;width:762px;height:1px;background:repeating-linear-gradient(90deg,#c4c4c4 0 1px,transparent 1px 2px);"></div>
<div class="r" style="left:0px;top:300px;width:40px;height:20px;background:#e4ebf6;"></div>
<div class="r" style="left:0px;top:319px;width:40px;height:1px;background:#aac0da;"></div>
<div class="r" style="left:0px;top:300px;width:40px;height:1px;background:#c6d4e6;"></div>
<div class="r" style="left:40px;top:300px;width:2px;height:20px;background:#b4c7de;"></div>
<div class="t" style="left:44.00px;top:300.95px;font-size:14.3px;line-height:19px;color:#000;font-weight:normal;transform:scaleX(0.93);transform-origin:left center;">VSD</div>
<div class="t" style="left:145.60px;top:300.95px;font-size:14.3px;line-height:19px;color:#000;font-weight:normal;transform:scaleX(0.93);transform-origin:left center;">AppDecDat</div>
<div class="t" style="left:267.50px;top:300.95px;font-size:14.3px;line-height:19px;color:#000;font-weight:normal;transform:scaleX(0.93);transform-origin:left center;">Date Réception</div>
<div class="t" style="left:649.00px;top:300.95px;font-size:14.3px;line-height:19px;color:#000;font-weight:normal;transform:scaleX(0.93);transform-origin:left center;">D</div>
<div class="t" style="left:701.00px;top:300.95px;font-size:14.3px;line-height:19px;color:#000;font-weight:normal;transform:scaleX(1.01);transform-origin:left center;">D/JJ/MM/AAAA</div>
<div class="r" style="left:41px;top:320px;width:762px;height:20px;background:#ffffff;"></div>
<div class="r" style="left:41px;top:339px;width:762px;height:1px;background:repeating-linear-gradient(90deg,#c4c4c4 0 1px,transparent 1px 2px);"></div>
<div class="r" style="left:0px;top:320px;width:40px;height:20px;background:#e4ebf6;"></div>
<div class="r" style="left:0px;top:339px;width:40px;height:1px;background:#aac0da;"></div>
<div class="r" style="left:0px;top:320px;width:40px;height:1px;background:#c6d4e6;"></div>
<div class="r" style="left:40px;top:320px;width:2px;height:20px;background:#b4c7de;"></div>
<div class="t" style="left:44.00px;top:320.95px;font-size:14.3px;line-height:19px;color:#000;font-weight:normal;transform:scaleX(0.93);transform-origin:left center;">VSD</div>
<div class="t" style="left:145.60px;top:320.95px;font-size:14.3px;line-height:19px;color:#000;font-weight:normal;transform:scaleX(0.93);transform-origin:left center;">AppDelai</div>
<div class="t" style="left:267.50px;top:320.95px;font-size:14.3px;line-height:19px;color:#000;font-weight:normal;transform:scaleX(0.93);transform-origin:left center;">Délai Appro</div>
<div class="t" style="left:649.00px;top:320.95px;font-size:14.3px;line-height:19px;color:#000;font-weight:normal;transform:scaleX(0.93);transform-origin:left center;">E</div>
<div class="t" style="left:701.00px;top:320.95px;font-size:14.3px;line-height:19px;color:#000;font-weight:normal;transform:scaleX(0.93);transform-origin:left center;">E/3</div>
<div class="r" style="left:41px;top:340px;width:762px;height:20px;background:#efefef;"></div>
<div class="r" style="left:41px;top:359px;width:762px;height:1px;background:repeating-linear-gradient(90deg,#c4c4c4 0 1px,transparent 1px 2px);"></div>
<div class="r" style="left:0px;top:340px;width:40px;height:20px;background:#e4ebf6;"></div>
<div class="r" style="left:0px;top:359px;width:40px;height:1px;background:#aac0da;"></div>
<div class="r" style="left:0px;top:340px;width:40px;height:1px;background:#c6d4e6;"></div>
<div class="r" style="left:40px;top:340px;width:2px;height:20px;background:#b4c7de;"></div>
<div class="t" style="left:44.00px;top:340.95px;font-size:14.3px;line-height:19px;color:#000;font-weight:normal;transform:scaleX(0.93);transform-origin:left center;">VSD</div>
<div class="t" style="left:145.60px;top:340.95px;font-size:14.3px;line-height:19px;color:#000;font-weight:normal;transform:scaleX(0.93);transform-origin:left center;">AppDelaiInf</div>
<div class="t" style="left:267.50px;top:340.95px;font-size:14.3px;line-height:19px;color:#000;font-weight:normal;transform:scaleX(0.93);transform-origin:left center;">Délai info</div>
<div class="t" style="left:649.00px;top:340.95px;font-size:14.3px;line-height:19px;color:#000;font-weight:normal;transform:scaleX(0.93);transform-origin:left center;">A</div>
<div class="t" style="left:701.00px;top:340.95px;font-size:14.3px;line-height:19px;color:#000;font-weight:normal;transform:scaleX(0.93);transform-origin:left center;">C/80</div>
<div class="r" style="left:41px;top:360px;width:762px;height:20px;background:#ffffff;"></div>
<div class="r" style="left:41px;top:379px;width:762px;height:1px;background:repeating-linear-gradient(90deg,#c4c4c4 0 1px,transparent 1px 2px);"></div>
<div class="r" style="left:0px;top:360px;width:40px;height:20px;background:#e4ebf6;"></div>
<div class="r" style="left:0px;top:379px;width:40px;height:1px;background:#aac0da;"></div>
<div class="r" style="left:0px;top:360px;width:40px;height:1px;background:#c6d4e6;"></div>
<div class="r" style="left:40px;top:360px;width:2px;height:20px;background:#b4c7de;"></div>
<div class="t" style="left:44.00px;top:360.95px;font-size:14.3px;line-height:19px;color:#000;font-weight:normal;transform:scaleX(0.93);transform-origin:left center;">VSD</div>
<div class="t" style="left:145.60px;top:360.95px;font-size:14.3px;line-height:19px;color:#000;font-weight:normal;transform:scaleX(0.93);transform-origin:left center;">AppDesCon</div>
<div class="t" style="left:267.50px;top:360.95px;font-size:14.3px;line-height:19px;color:#000;font-weight:normal;transform:scaleX(0.93);transform-origin:left center;">Désignation contrat</div>
<div class="t" style="left:649.00px;top:360.95px;font-size:14.3px;line-height:19px;color:#000;font-weight:normal;transform:scaleX(0.93);transform-origin:left center;">A</div>
<div class="t" style="left:701.00px;top:360.95px;font-size:14.3px;line-height:19px;color:#000;font-weight:normal;transform:scaleX(0.93);transform-origin:left center;">C/30</div>
<div class="r" style="left:41px;top:380px;width:762px;height:20px;background:#efefef;"></div>
<div class="r" style="left:41px;top:399px;width:762px;height:1px;background:repeating-linear-gradient(90deg,#c4c4c4 0 1px,transparent 1px 2px);"></div>
<div class="r" style="left:0px;top:380px;width:40px;height:20px;background:#e4ebf6;"></div>
<div class="r" style="left:0px;top:399px;width:40px;height:1px;background:#aac0da;"></div>
<div class="r" style="left:0px;top:380px;width:40px;height:1px;background:#c6d4e6;"></div>
<div class="r" style="left:40px;top:380px;width:2px;height:20px;background:#b4c7de;"></div>
<div class="t" style="left:44.00px;top:380.95px;font-size:14.3px;line-height:19px;color:#000;font-weight:normal;transform:scaleX(0.93);transform-origin:left center;">VSD</div>
<div class="t" style="left:145.60px;top:380.95px;font-size:14.3px;line-height:19px;color:#000;font-weight:normal;transform:scaleX(0.93);transform-origin:left center;">AppDEvise</div>
<div class="t" style="left:267.50px;top:380.95px;font-size:14.3px;line-height:19px;color:#000;font-weight:normal;transform:scaleX(0.93);transform-origin:left center;">Devise</div>
<div class="t" style="left:649.00px;top:380.95px;font-size:14.3px;line-height:19px;color:#000;font-weight:normal;transform:scaleX(0.93);transform-origin:left center;">A</div>
<div class="t" style="left:701.00px;top:380.95px;font-size:14.3px;line-height:19px;color:#000;font-weight:normal;transform:scaleX(0.93);transform-origin:left center;">C/10</div>
<div class="r" style="left:41px;top:400px;width:762px;height:20px;background:#ffffff;"></div>
<div class="r" style="left:41px;top:419px;width:762px;height:1px;background:repeating-linear-gradient(90deg,#c4c4c4 0 1px,transparent 1px 2px);"></div>
<div class="r" style="left:0px;top:400px;width:40px;height:20px;background:#e4ebf6;"></div>
<div class="r" style="left:0px;top:419px;width:40px;height:1px;background:#aac0da;"></div>
<div class="r" style="left:0px;top:400px;width:40px;height:1px;background:#c6d4e6;"></div>
<div class="r" style="left:40px;top:400px;width:2px;height:20px;background:#b4c7de;"></div>
<div class="t" style="left:44.00px;top:400.95px;font-size:14.3px;line-height:19px;color:#000;font-weight:normal;transform:scaleX(0.93);transform-origin:left center;">VSD</div>
<div class="t" style="left:145.60px;top:400.95px;font-size:14.3px;line-height:19px;color:#000;font-weight:normal;transform:scaleX(0.93);transform-origin:left center;">AppFourRegMod</div>
<div class="t" style="left:267.50px;top:400.95px;font-size:14.3px;line-height:19px;color:#000;font-weight:normal;transform:scaleX(0.93);transform-origin:left center;">Mode de règlement</div>
<div class="t" style="left:649.00px;top:400.95px;font-size:14.3px;line-height:19px;color:#000;font-weight:normal;transform:scaleX(0.93);transform-origin:left center;">A</div>
<div class="t" style="left:701.00px;top:400.95px;font-size:14.3px;line-height:19px;color:#000;font-weight:normal;transform:scaleX(0.93);transform-origin:left center;">C/60</div>
<div class="r" style="left:41px;top:420px;width:762px;height:20px;background:#efefef;"></div>
<div class="r" style="left:41px;top:439px;width:762px;height:1px;background:repeating-linear-gradient(90deg,#c4c4c4 0 1px,transparent 1px 2px);"></div>
<div class="r" style="left:0px;top:420px;width:40px;height:20px;background:#e4ebf6;"></div>
<div class="r" style="left:0px;top:439px;width:40px;height:1px;background:#aac0da;"></div>
<div class="r" style="left:0px;top:420px;width:40px;height:1px;background:#c6d4e6;"></div>
<div class="r" style="left:40px;top:420px;width:2px;height:20px;background:#b4c7de;"></div>
<div class="t" style="left:44.00px;top:420.95px;font-size:14.3px;line-height:19px;color:#000;font-weight:normal;transform:scaleX(0.93);transform-origin:left center;">VSD</div>
<div class="t" style="left:145.60px;top:420.95px;font-size:14.3px;line-height:19px;color:#000;font-weight:normal;transform:scaleX(0.93);transform-origin:left center;">AppGesUti</div>
<div class="t" style="left:267.50px;top:420.95px;font-size:14.3px;line-height:19px;color:#000;font-weight:normal;transform:scaleX(0.93);transform-origin:left center;">Gestionnaire</div>
<div class="t" style="left:649.00px;top:420.95px;font-size:14.3px;line-height:19px;color:#000;font-weight:normal;transform:scaleX(0.93);transform-origin:left center;">A</div>
<div class="t" style="left:701.00px;top:420.95px;font-size:14.3px;line-height:19px;color:#000;font-weight:normal;transform:scaleX(0.93);transform-origin:left center;">C/30</div>
<div class="r" style="left:41px;top:440px;width:762px;height:20px;background:#ffffff;"></div>
<div class="r" style="left:41px;top:459px;width:762px;height:1px;background:repeating-linear-gradient(90deg,#c4c4c4 0 1px,transparent 1px 2px);"></div>
<div class="r" style="left:0px;top:440px;width:40px;height:20px;background:#e4ebf6;"></div>
<div class="r" style="left:0px;top:459px;width:40px;height:1px;background:#aac0da;"></div>
<div class="r" style="left:0px;top:440px;width:40px;height:1px;background:#c6d4e6;"></div>
<div class="r" style="left:40px;top:440px;width:2px;height:20px;background:#b4c7de;"></div>
<div class="t" style="left:44.00px;top:440.95px;font-size:14.3px;line-height:19px;color:#000;font-weight:normal;transform:scaleX(0.93);transform-origin:left center;">VSD</div>
<div class="t" style="left:145.60px;top:440.95px;font-size:14.3px;line-height:19px;color:#000;font-weight:normal;transform:scaleX(0.93);transform-origin:left center;">AppLstFou</div>
<div class="t" style="left:267.50px;top:440.95px;font-size:14.3px;line-height:19px;color:#000;font-weight:normal;transform:scaleX(0.93);transform-origin:left center;">Liste des Fournisseurs</div>
<div class="t" style="left:649.00px;top:440.95px;font-size:14.3px;line-height:19px;color:#000;font-weight:normal;transform:scaleX(0.93);transform-origin:left center;">C</div>
<div class="t" style="left:701.00px;top:440.95px;font-size:14.3px;line-height:19px;color:#000;font-weight:normal;transform:scaleX(0.93);transform-origin:left center;">C/100</div>
<div class="r" style="left:41px;top:460px;width:762px;height:20px;background:#efefef;"></div>
<div class="r" style="left:41px;top:479px;width:762px;height:1px;background:repeating-linear-gradient(90deg,#c4c4c4 0 1px,transparent 1px 2px);"></div>
<div class="r" style="left:0px;top:460px;width:40px;height:20px;background:#e4ebf6;"></div>
<div class="r" style="left:0px;top:479px;width:40px;height:1px;background:#aac0da;"></div>
<div class="r" style="left:0px;top:460px;width:40px;height:1px;background:#c6d4e6;"></div>
<div class="r" style="left:40px;top:460px;width:2px;height:20px;background:#b4c7de;"></div>
<div class="t" style="left:44.00px;top:460.95px;font-size:14.3px;line-height:19px;color:#000;font-weight:normal;transform:scaleX(0.93);transform-origin:left center;">VSD</div>
<div class="t" style="left:145.60px;top:460.95px;font-size:14.3px;line-height:19px;color:#000;font-weight:normal;transform:scaleX(0.93);transform-origin:left center;">AppNumBL</div>
<div class="t" style="left:267.50px;top:460.95px;font-size:14.3px;line-height:19px;color:#000;font-weight:normal;transform:scaleX(0.93);transform-origin:left center;">Numero BL</div>
<div class="t" style="left:649.00px;top:460.95px;font-size:14.3px;line-height:19px;color:#000;font-weight:normal;transform:scaleX(0.93);transform-origin:left center;">A</div>
<div class="t" style="left:701.00px;top:460.95px;font-size:14.3px;line-height:19px;color:#000;font-weight:normal;transform:scaleX(0.93);transform-origin:left center;">C/10</div>
<div class="r" style="left:41px;top:480px;width:762px;height:20px;background:#ffffff;"></div>
<div class="r" style="left:41px;top:499px;width:762px;height:1px;background:repeating-linear-gradient(90deg,#c4c4c4 0 1px,transparent 1px 2px);"></div>
<div class="r" style="left:0px;top:480px;width:40px;height:20px;background:#e4ebf6;"></div>
<div class="r" style="left:0px;top:499px;width:40px;height:1px;background:#aac0da;"></div>
<div class="r" style="left:0px;top:480px;width:40px;height:1px;background:#c6d4e6;"></div>
<div class="r" style="left:40px;top:480px;width:2px;height:20px;background:#b4c7de;"></div>
<div class="t" style="left:44.00px;top:480.95px;font-size:14.3px;line-height:19px;color:#000;font-weight:normal;transform:scaleX(0.93);transform-origin:left center;">VSD</div>
<div class="t" style="left:145.60px;top:480.95px;font-size:14.3px;line-height:19px;color:#000;font-weight:normal;transform:scaleX(0.93);transform-origin:left center;">AppNumCom</div>
<div class="t" style="left:267.50px;top:480.95px;font-size:14.3px;line-height:19px;color:#000;font-weight:normal;transform:scaleX(0.93);transform-origin:left center;">Commande Fournisseur</div>
<div class="t" style="left:649.00px;top:480.95px;font-size:14.3px;line-height:19px;color:#000;font-weight:normal;transform:scaleX(0.93);transform-origin:left center;">A</div>
<div class="t" style="left:701.00px;top:480.95px;font-size:14.3px;line-height:19px;color:#000;font-weight:normal;transform:scaleX(0.93);transform-origin:left center;">C/10</div>
<div class="r" style="left:41px;top:500px;width:762px;height:20px;background:#efefef;"></div>
<div class="r" style="left:41px;top:519px;width:762px;height:1px;background:repeating-linear-gradient(90deg,#c4c4c4 0 1px,transparent 1px 2px);"></div>
<div class="r" style="left:0px;top:500px;width:40px;height:20px;background:#e4ebf6;"></div>
<div class="r" style="left:0px;top:519px;width:40px;height:1px;background:#aac0da;"></div>
<div class="r" style="left:0px;top:500px;width:40px;height:1px;background:#c6d4e6;"></div>
<div class="r" style="left:40px;top:500px;width:2px;height:20px;background:#b4c7de;"></div>
<div class="t" style="left:44.00px;top:500.95px;font-size:14.3px;line-height:19px;color:#000;font-weight:normal;transform:scaleX(0.93);transform-origin:left center;">VSD</div>
<div class="t" style="left:145.60px;top:500.95px;font-size:14.3px;line-height:19px;color:#000;font-weight:normal;transform:scaleX(0.93);transform-origin:left center;">AppNumLig</div>
<div class="t" style="left:267.50px;top:500.95px;font-size:14.3px;line-height:19px;color:#000;font-weight:normal;transform:scaleX(0.93);transform-origin:left center;">Numéro de Ligne de Commande [C]</div>
<div class="t" style="left:518.00px;top:500.95px;font-size:14.3px;line-height:19px;color:#000;font-weight:normal;transform:scaleX(0.93);transform-origin:left center;">AppNumLig</div>
<div class="t" style="left:649.00px;top:500.95px;font-size:14.3px;line-height:19px;color:#000;font-weight:normal;transform:scaleX(0.93);transform-origin:left center;">A</div>
<div class="t" style="left:701.00px;top:500.95px;font-size:14.3px;line-height:19px;color:#000;font-weight:normal;transform:scaleX(0.93);transform-origin:left center;">C/12</div>
<div class="r" style="left:41px;top:520px;width:762px;height:20px;background:#ffffff;"></div>
<div class="r" style="left:41px;top:539px;width:762px;height:1px;background:repeating-linear-gradient(90deg,#c4c4c4 0 1px,transparent 1px 2px);"></div>
<div class="r" style="left:0px;top:520px;width:40px;height:20px;background:#e4ebf6;"></div>
<div class="r" style="left:0px;top:539px;width:40px;height:1px;background:#aac0da;"></div>
<div class="r" style="left:0px;top:520px;width:40px;height:1px;background:#c6d4e6;"></div>
<div class="r" style="left:40px;top:520px;width:2px;height:20px;background:#b4c7de;"></div>
<div class="t" style="left:44.00px;top:520.95px;font-size:14.3px;line-height:19px;color:#000;font-weight:normal;transform:scaleX(0.93);transform-origin:left center;">VSD</div>
<div class="t" style="left:145.60px;top:520.95px;font-size:14.3px;line-height:19px;color:#000;font-weight:normal;transform:scaleX(0.93);transform-origin:left center;">AppQteMin</div>
<div class="t" style="left:267.50px;top:520.95px;font-size:14.3px;line-height:19px;color:#000;font-weight:normal;transform:scaleX(0.93);transform-origin:left center;">Quantité Mini Appro</div>
<div class="t" style="left:649.00px;top:520.95px;font-size:14.3px;line-height:19px;color:#000;font-weight:normal;transform:scaleX(0.93);transform-origin:left center;">R</div>
<div class="t" style="left:701.00px;top:520.95px;font-size:14.3px;line-height:19px;color:#000;font-weight:normal;transform:scaleX(0.93);transform-origin:left center;">R/6,3-</div>
<div class="r" style="left:41px;top:540px;width:762px;height:20px;background:#efefef;"></div>
<div class="r" style="left:41px;top:559px;width:762px;height:1px;background:repeating-linear-gradient(90deg,#c4c4c4 0 1px,transparent 1px 2px);"></div>
<div class="r" style="left:0px;top:540px;width:40px;height:20px;background:#e4ebf6;"></div>
<div class="r" style="left:0px;top:559px;width:40px;height:1px;background:#aac0da;"></div>
<div class="r" style="left:0px;top:540px;width:40px;height:1px;background:#c6d4e6;"></div>
<div class="r" style="left:40px;top:540px;width:2px;height:20px;background:#b4c7de;"></div>
<div class="t" style="left:44.00px;top:540.95px;font-size:14.3px;line-height:19px;color:#000;font-weight:normal;transform:scaleX(0.93);transform-origin:left center;">VSD</div>
<div class="t" style="left:145.60px;top:540.95px;font-size:14.3px;line-height:19px;color:#000;font-weight:normal;transform:scaleX(0.93);transform-origin:left center;">AppRefFour</div>
<div class="t" style="left:267.50px;top:540.95px;font-size:14.3px;line-height:19px;color:#000;font-weight:normal;transform:scaleX(0.93);transform-origin:left center;">Référence Fournisseur</div>
<div class="t" style="left:649.00px;top:540.95px;font-size:14.3px;line-height:19px;color:#000;font-weight:normal;transform:scaleX(0.93);transform-origin:left center;">A</div>
<div class="t" style="left:701.00px;top:540.95px;font-size:14.3px;line-height:19px;color:#000;font-weight:normal;transform:scaleX(0.93);transform-origin:left center;">C/30</div>
<div class="r" style="left:142px;top:0px;width:1px;height:542px;background:repeating-linear-gradient(180deg,#c4c4c4 0 1px,transparent 1px 2px);"></div>
<div class="r" style="left:263px;top:0px;width:1px;height:542px;background:repeating-linear-gradient(180deg,#c4c4c4 0 1px,transparent 1px 2px);"></div>
<div class="r" style="left:514px;top:0px;width:1px;height:542px;background:repeating-linear-gradient(180deg,#c4c4c4 0 1px,transparent 1px 2px);"></div>
<div class="r" style="left:646px;top:0px;width:1px;height:542px;background:repeating-linear-gradient(180deg,#c4c4c4 0 1px,transparent 1px 2px);"></div>
<div class="r" style="left:697px;top:0px;width:1px;height:542px;background:repeating-linear-gradient(180deg,#c4c4c4 0 1px,transparent 1px 2px);"></div>
<div class="r" style="left:42px;top:0px;width:98px;height:17px;border:2px solid #000;background:#fff;"></div>
<div class="t" style="left:44.00px;top:0.95px;font-size:14.3px;line-height:19px;color:#000;font-weight:normal;transform:scaleX(0.93);transform-origin:left center;">VSD</div>
</div>
<div class="r" style="left:1225px;top:252px;width:20px;height:564px;background:#7296c1;"></div>
<div class="r" style="left:1225px;top:252px;width:20px;height:20px;background:#5d7eab;"></div>
<div class="r" style="left:1226px;top:253px;width:18px;height:18px;background:linear-gradient(90deg,#dde8f7 0 50%,#c2d5ef 50% 100%);"></div>
<svg class="r" style="left:1230px;top:257px" width="11" height="7"><path d="M0 7 L11 7 L5.5 0 Z" fill="#3d4a66"/></svg>
<div class="r" style="left:1225px;top:271px;width:20px;height:15px;background:#5d7eab;"></div>
<div class="r" style="left:1226px;top:272px;width:18px;height:13px;background:linear-gradient(90deg,#dde8f7 0 50%,#c2d5ef 50% 100%);"></div>
<div class="r" style="left:1246px;top:245px;width:668px;height:571px;background:#f0f0f0;"></div>
<div class="r" style="left:1246px;top:245px;width:668px;height:33px;background:linear-gradient(#ececec,#f7f7f7);"></div>
<div class="r" style="left:1254px;top:278px;width:1px;height:538px;background:#a0a0a0;"></div>
<svg class="r" style="left:1246px;top:250px" width="668" height="34" viewBox="1246 250 668 34">
<path d="M1431 263 Q1434 254.5 1441 254.5 H1515.5 Q1518 254.5 1519.5 257 L1530.5 278.5" fill="#f3f3f3" stroke="#a0a0a0" stroke-width="1"/>
<path d="M1351 263 Q1354 254.5 1360 254.5 H1423.5 Q1426 254.5 1427.5 257 L1440.5 278.5" fill="#f3f3f3" stroke="#a0a0a0" stroke-width="1"/>
<path d="M1261.5 278.5 L1274.5 256 Q1275.5 254.5 1278 254.5 H1342 Q1344.5 254.5 1346 257 L1358.5 278.5" fill="#f5f5f5" stroke="#a0a0a0" stroke-width="1"/>
<path d="M1254 278.5 H1261.5 M1530.5 278.5 H1914" stroke="#a0a0a0" stroke-width="1"/>
</svg>
<div class="t" style="left:1249.20px;width:120px;text-align:center;top:257.71px;font-size:14.4px;line-height:19px;color:#000;font-weight:bold;">Définition</div>
<div class="t" style="left:1330.10px;width:120px;text-align:center;top:258.79px;font-size:13.3px;line-height:17px;color:#000;font-weight:normal;">Val. Défaut</div>
<div class="t" style="left:1416.00px;width:120px;text-align:center;top:259.00px;font-size:12.7px;line-height:17px;color:#000;font-weight:normal;">Commentaire</div>
<div class="t" style="left:1150.00px;width:200px;text-align:right;top:286.35px;font-size:14.3px;line-height:19px;color:#000;font-weight:normal;transform:scaleX(0.93);transform-origin:right center;">Type Variable</div>
<div class="t" style="left:1150.00px;width:200px;text-align:right;top:309.95px;font-size:14.3px;line-height:19px;color:#000;font-weight:normal;transform:scaleX(0.93);transform-origin:right center;">Variable</div>
<div class="t" style="left:1150.00px;width:200px;text-align:right;top:333.25px;font-size:14.3px;line-height:19px;color:#000;font-weight:normal;transform:scaleX(0.93);transform-origin:right center;">Var. Figée</div>
<div class="t" style="left:1150.00px;width:200px;text-align:right;top:357.25px;font-size:14.3px;line-height:19px;color:#000;font-weight:normal;transform:scaleX(0.93);transform-origin:right center;">Etat</div>
<div class="t" style="left:1150.00px;width:200px;text-align:right;top:381.15px;font-size:14.3px;line-height:19px;color:#000;font-weight:normal;transform:scaleX(0.93);transform-origin:right center;">Désignation</div>
<div class="t" style="left:1150.00px;width:200px;text-align:right;top:404.55px;font-size:14.3px;line-height:19px;color:#000;font-weight:normal;transform:scaleX(0.93);transform-origin:right center;">Dés. Courte</div>
<div class="t" style="left:1150.00px;width:200px;text-align:right;top:428.55px;font-size:14.3px;line-height:19px;color:#000;font-weight:normal;transform:scaleX(0.93);transform-origin:right center;">Mot Directeur</div>
<div class="t" style="left:1150.00px;width:200px;text-align:right;top:455.15px;font-size:14.3px;line-height:19px;color:#000;font-weight:normal;transform:scaleX(0.93);transform-origin:right center;">Famille</div>
<div class="t" style="left:1150.00px;width:200px;text-align:right;top:483.55px;font-size:14.3px;line-height:19px;color:#000;font-weight:normal;transform:scaleX(0.93);transform-origin:right center;">Sous-Famille</div>
<div class="t" style="left:1150.00px;width:200px;text-align:right;top:511.80px;font-size:14.3px;line-height:19px;color:#000;font-weight:normal;transform:scaleX(0.93);transform-origin:right center;">Type</div>
<div class="t" style="left:1150.00px;width:200px;text-align:right;top:537.85px;font-size:14.3px;line-height:19px;color:#000;font-weight:normal;transform:scaleX(0.93);transform-origin:right center;">Nbre Indices</div>
<div class="t" style="left:1150.00px;width:200px;text-align:right;top:564.95px;font-size:14.3px;line-height:19px;color:#000;font-weight:normal;transform:scaleX(0.93);transform-origin:right center;">Format</div>
<div class="t" style="left:1150.00px;width:200px;text-align:right;top:590.95px;font-size:14.3px;line-height:19px;color:#000;font-weight:normal;transform:scaleX(0.93);transform-origin:right center;">Historique ?</div>
<div class="t" style="left:1370.00px;top:286.35px;font-size:14.3px;line-height:19px;color:#000;font-weight:normal;transform:scaleX(0.93);transform-origin:left center;">VSD</div>
<div class="t" style="left:1370.00px;top:309.95px;font-size:14.3px;line-height:19px;color:#000;font-weight:normal;transform:scaleX(0.93);transform-origin:left center;">AgeEvtSta</div>
<div class="t" style="left:1370.00px;top:357.25px;font-size:14.3px;line-height:19px;color:#000;font-weight:normal;transform:scaleX(0.93);transform-origin:left center;">V</div>
<div class="t" style="left:1370.00px;top:381.15px;font-size:14.3px;line-height:19px;color:#000;font-weight:normal;transform:scaleX(0.93);transform-origin:left center;">Statut évènement</div>
<div class="t" style="left:1370.00px;top:404.55px;font-size:14.3px;line-height:19px;color:#000;font-weight:normal;transform:scaleX(0.93);transform-origin:left center;">Statut evt</div>
<div class="t" style="left:1379.60px;top:539.33px;font-size:12.9px;line-height:17px;color:#1a1a40;font-weight:normal;transform:scaleX(0.93);transform-origin:left center;">0</div>
<div class="r" style="left:1483px;top:286px;width:17px;height:17px;background:#cfcfcf;"></div>
<div class="t" style="left:1481.50px;width:20px;text-align:center;top:286.84px;font-size:12px;line-height:16px;color:#f4f4f4;font-weight:bold;">?</div>
<div class="t" style="left:1507.00px;top:286.90px;font-size:14.14px;line-height:18px;color:#000;font-weight:normal;transform:scaleX(0.93);transform-origin:left center;">Variables Saisies Dynamiques</div>
<div class="r" style="left:1366px;top:336px;width:11px;height:11px;border:1px solid #d2d2d2;background:#fff;"></div>
<div class="r" style="left:1366px;top:593px;width:11px;height:11px;border:1px solid #d2d2d2;background:#fff;"></div>
<div class="r" style="left:1366px;top:451px;width:346px;height:24px;border:1px solid #c2c2c2;background:#cccccc;"></div>
<svg class="r" style="left:1692.0px;top:461px;" width="11" height="7" viewBox="0 0 11 7"><path d="M0.5 0.5 L5.5 5.5 L10.5 0.5" stroke="#9a9a9a" stroke-width="1.1" fill="none"/></svg>
<div class="r" style="left:1366px;top:480px;width:346px;height:24px;border:1px solid #c2c2c2;background:#cccccc;"></div>
<svg class="r" style="left:1692.0px;top:490px;" width="11" height="7" viewBox="0 0 11 7"><path d="M0.5 0.5 L5.5 5.5 L10.5 0.5" stroke="#9a9a9a" stroke-width="1.1" fill="none"/></svg>
<div class="r" style="left:1366px;top:508px;width:346px;height:24px;border:1px solid #c2c2c2;background:#cccccc;"></div>
<svg class="r" style="left:1692.0px;top:518px;" width="11" height="7" viewBox="0 0 11 7"><path d="M0.5 0.5 L5.5 5.5 L10.5 0.5" stroke="#9a9a9a" stroke-width="1.1" fill="none"/></svg>
<div class="t" style="left:1371.50px;top:511.75px;font-size:14.3px;line-height:19px;color:#7d7d7d;font-weight:normal;transform:scaleX(0.93);transform-origin:left center;">[A] Type Alp.</div>
<div class="r" style="left:1366px;top:561px;width:392px;height:24px;border:1px solid #c2c2c2;background:#cccccc;"></div>
<svg class="r" style="left:1738.0px;top:571px;" width="11" height="7" viewBox="0 0 11 7"><path d="M0.5 0.5 L5.5 5.5 L10.5 0.5" stroke="#9a9a9a" stroke-width="1.1" fill="none"/></svg>
<div class="t" style="left:1371.50px;top:564.75px;font-size:14.3px;line-height:19px;color:#7d7d7d;font-weight:normal;transform:scaleX(0.93);transform-origin:left center;">[C/10] Chaîne sur 10 Position(s)</div>
<div class="r" style="left:741px;top:332px;width:313px;height:389px;border:1px solid #a6a6a6;background:#f0f0f0;box-shadow:2px 2px 3px rgba(0,0,0,0.42);"></div>
<div class="r" style="left:743px;top:333px;width:308px;height:28px;border:1px solid #e6e65c;background:#8dc865;"></div>
<div class="t" style="left:785.50px;top:338.39px;font-size:15.91px;line-height:21px;color:#141414;font-weight:normal;transform:scaleX(0.93);transform-origin:left center;">Création (F9)</div>
<div class="t" style="left:785.50px;top:364.89px;font-size:15.91px;line-height:21px;color:#141414;font-weight:normal;transform:scaleX(0.93);transform-origin:left center;">Modification (F1)</div>
<div class="t" style="left:785.50px;top:392.39px;font-size:15.91px;line-height:21px;color:#141414;font-weight:normal;transform:scaleX(0.93);transform-origin:left center;">Modification Globale (Maj+F1)</div>
<div class="t" style="left:785.50px;top:419.79px;font-size:15.91px;line-height:21px;color:#141414;font-weight:normal;transform:scaleX(0.93);transform-origin:left center;">Duplication (F7)</div>
<div class="t" style="left:785.50px;top:447.19px;font-size:15.91px;line-height:21px;color:#141414;font-weight:normal;transform:scaleX(0.93);transform-origin:left center;">Suppression Logique (F6)</div>
<div class="t" style="left:785.50px;top:474.69px;font-size:15.91px;line-height:21px;color:#141414;font-weight:normal;transform:scaleX(0.93);transform-origin:left center;">Détail (F8)</div>
<div class="t" style="left:785.50px;top:511.49px;font-size:15.91px;line-height:21px;color:#141414;font-weight:normal;transform:scaleX(0.93);transform-origin:left center;">Cas d&#x27;emploi (DIALOG)</div>
<div class="t" style="left:785.50px;top:538.99px;font-size:15.91px;line-height:21px;color:#141414;font-weight:normal;transform:scaleX(0.93);transform-origin:left center;">Cas d&#x27;emploi (GFD)</div>
<div class="t" style="left:785.50px;top:575.59px;font-size:15.91px;line-height:21px;color:#141414;font-weight:normal;transform:scaleX(0.93);transform-origin:left center;">Exportation</div>
<div class="t" style="left:785.50px;top:603.19px;font-size:15.91px;line-height:21px;color:#141414;font-weight:normal;transform:scaleX(0.93);transform-origin:left center;">Importation de Données</div>
<div class="t" style="left:785.50px;top:639.19px;font-size:15.91px;line-height:21px;color:#141414;font-weight:normal;transform:scaleX(0.93);transform-origin:left center;">Définition Filtres et Tris</div>
<div class="t" style="left:785.50px;top:666.59px;font-size:15.91px;line-height:21px;color:#141414;font-weight:normal;transform:scaleX(0.93);transform-origin:left center;">Sélection Filtres et Tris</div>
<div class="t" style="left:785.50px;top:694.39px;font-size:15.91px;line-height:21px;color:#141414;font-weight:normal;transform:scaleX(0.93);transform-origin:left center;">Condition par Défaut</div>
<div class="r" style="left:780px;top:504px;width:272px;height:1px;background:#d4d4d4;"></div>
<div class="r" style="left:780px;top:567px;width:272px;height:1px;background:#d4d4d4;"></div>
<div class="r" style="left:780px;top:631px;width:272px;height:1px;background:#d4d4d4;"></div>
<svg class="r" style="left:1035px;top:581px;" width="8" height="11" viewBox="0 0 8 11"><path d="M1.5 1 L6 5.5 L1.5 10" stroke="#3a3a3a" stroke-width="1.2" fill="none"/></svg>
<svg class="r" style="left:1035px;top:672px;" width="8" height="11" viewBox="0 0 8 11"><path d="M1.5 1 L6 5.5 L1.5 10" stroke="#3a3a3a" stroke-width="1.2" fill="none"/></svg>
<svg class="r" style="left:906px;top:340px;" width="24" height="34" viewBox="0 0 24 34"><path d="M2.4 2.9 L2.4 25.8 L7.6 20.8 L11.8 30.2 L15.6 28.6 L11.6 19.6 L19.2 19.3 Z" fill="#fff" stroke="#fbf7b0" stroke-width="3.6" stroke-linejoin="round"/><path d="M2.4 2.9 L2.4 25.8 L7.6 20.8 L11.8 30.2 L15.6 28.6 L11.6 19.6 L19.2 19.3 Z" fill="#fff" stroke="#000" stroke-width="1.9" stroke-linejoin="round"/><path d="M3.5 5.4 L3.5 23.2 L8 18.8 L16.6 18.4 Z" fill="#faf25c"/></svg>
</body></html>
